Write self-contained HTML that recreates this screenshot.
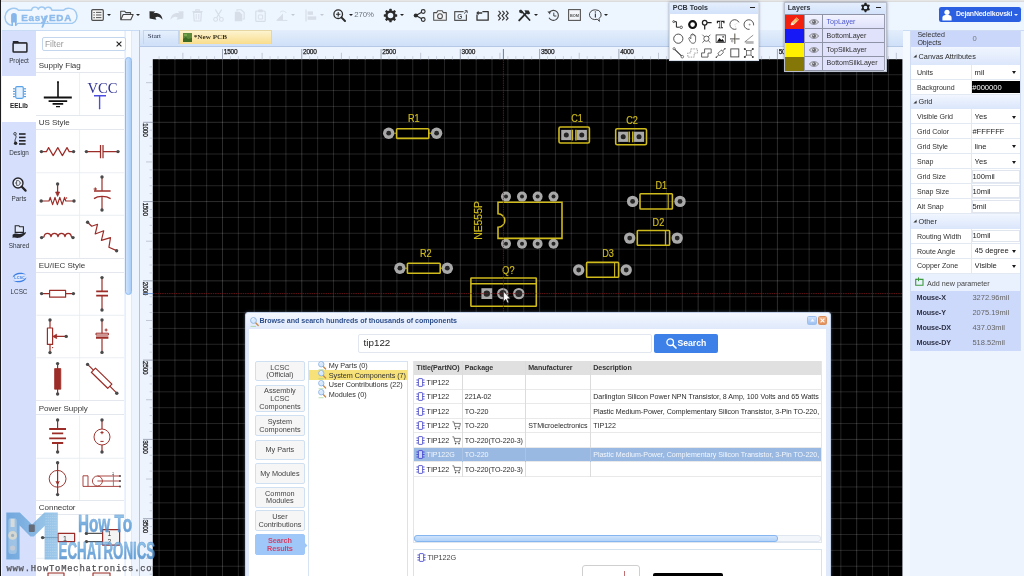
<!DOCTYPE html><html><head><meta charset="utf-8"><title>EasyEDA</title><style>
*{box-sizing:border-box;margin:0;padding:0}
html,body{width:1024px;height:576px;overflow:hidden;background:#edf4fe;font-family:"Liberation Sans",sans-serif;font-size:8px;color:#333}
.abs{position:absolute}
#root{position:absolute;left:0;top:0;width:1024px;height:576px;overflow:hidden;background:#edf4fe;filter:blur(0.45px)}
.t{position:absolute;white-space:nowrap;line-height:1}


.ti{position:absolute;overflow:visible}
.dd{position:absolute;width:0;height:0;border-left:2.2px solid transparent;border-right:2.2px solid transparent;border-top:2.6px solid #222}
.dd.dis{border-top-color:#c3c9d3}


#navbg{position:absolute;left:2px;top:30px;width:34.2px;height:546px;background:#d6e0fc}
#navsel{position:absolute;left:2px;top:76px;width:34.2px;height:46px;background:#fff}
.nl{position:absolute;left:2px;width:34px;text-align:center;font-size:6.35px;color:#33373f;line-height:1;white-space:nowrap}


#libbg{position:absolute;left:36.2px;top:31px;width:88.3px;height:545px;background:#fff}
#filter{position:absolute;left:41.6px;top:37px;width:84px;height:13.6px;border:1px solid #c3d6ee;border-radius:2px;background:#fff}
.lh{position:absolute;left:36.2px;width:88.3px;height:15px;background:#fff;border-top:1px solid #e4e8ee;border-bottom:1px solid #e4e8ee;font-size:8.05px;color:#3a3a3a;padding:3.4px 0 0 2.6px;line-height:1;white-space:nowrap;letter-spacing:-0.05px}
#lsb{position:absolute;left:125px;top:57px;width:6.8px;height:238.4px;background:linear-gradient(90deg,#cfe3fc,#a9cdf8);border:1px solid #8dbbf0;border-radius:3.4px}
#lsbt{position:absolute;left:124.6px;top:31px;width:7.2px;height:545px;background:#fbfdff;border-left:1px solid #e6eef9;border-right:1px solid #dfe9f7}


#tabbar{position:absolute;left:139px;top:30px;width:764px;height:17px;background:linear-gradient(#e3eefc,#cfe0f8);border-left:1px solid #b9c7dc;border-bottom:1px solid #b5c9e6}
#tabStart{position:absolute;left:143px;top:30.4px;width:36px;height:13.6px;background:linear-gradient(#e6f0fd,#cfe0f8);border:1px solid #c5d5ec;border-bottom:none}
#tabPcb{position:absolute;left:179px;top:30.4px;width:93px;height:13.6px;background:linear-gradient(#fdf3cf,#f8dd8c);border:1px solid #e6d6a0;border-bottom:none}
#rulerbg{position:absolute;left:139px;top:47px;width:764px;height:529px;background:#eef4fe;border-left:1px solid #b9c2d4}


#rp{position:absolute;left:910.4px;top:30.4px;width:110.8px;height:321px;background:#fff;border:1px solid #cfdcf4}
.rr{position:absolute;left:911.4px;width:108.8px;border-bottom:1px solid #e3e9f3;background:#fff}
.rh{position:absolute;left:911.4px;width:108.8px;background:linear-gradient(#f1f6ff,#dbe6fb);font-size:7.3px;color:#2b2b2b;line-height:1;white-space:nowrap}
.rk{position:absolute;left:917px;font-size:7.05px;color:#303030;line-height:1;white-space:nowrap}
.rv{position:absolute;left:972.4px;font-size:7.6px;color:#222;line-height:1;white-space:nowrap}
.rsep{position:absolute;left:971.4px;width:1px;background:#e3e9f3}
.rdd{position:absolute;left:1011.6px;width:0;height:0;border-left:2.5px solid transparent;border-right:2.5px solid transparent;border-top:3.2px solid #1a1a1a}
.rin{position:absolute;left:972px;width:47.6px;border:1px solid #e1e6ee;background:#fff}


.fp{position:absolute;background:#fff;box-shadow:inset 0 0 0 1px #d5dde9,0 0 2.5px rgba(60,70,90,.55)}
.fph{position:absolute;left:1px;top:1px;right:1px;height:11.6px;background:linear-gradient(#e4eefd,#d3e2fa)}
.fpt{position:absolute;left:3.8px;top:2.7px;font-size:7.05px;font-weight:bold;color:#30343c;line-height:1;white-space:nowrap}
.lyr{position:absolute;left:1.2px;width:98.4px;height:13.9px;background:#e0e1fb;border-bottom:1px solid #8f93a6}
.lyn{position:absolute;left:42.6px;font-size:7.1px;color:#333;line-height:1;white-space:nowrap;letter-spacing:-0.05px}


#dlg{position:absolute;left:245px;top:312.4px;width:586px;height:270px;background:#dfe9fa;border:1px solid #c4d3ea;border-radius:3px 3px 0 0;box-shadow:0 0 3px rgba(120,140,170,.6)}
#dlgh{position:absolute;left:246px;top:313.4px;width:584px;height:15.4px;background:linear-gradient(#f4f8ff,#dfe9fb);border-radius:3px 3px 0 0}
#dlgb{position:absolute;left:248.8px;top:328.8px;width:577.6px;height:250px;background:#fff}
.dbtn{position:absolute;left:255.2px;width:49.4px;background:#f6f6f6;border:1px solid #cfe0f3;border-radius:2px;font-size:7.3px;color:#444;text-align:center;line-height:7.9px;display:flex;align-items:center;justify-content:center;padding-top:0.6px}
.tr{position:absolute;left:413.8px;width:407.6px;height:14.5px;border-bottom:1px solid #e9e9e9;background:#fff}
.tc{position:absolute;font-size:7.1px;color:#2a2a2a;line-height:1;white-space:nowrap;letter-spacing:-0.05px}
.vs{position:absolute;width:1px;background:#dcdcdc}
.tree{position:absolute;left:328.8px;font-size:7.25px;color:#333;line-height:1;white-space:nowrap;letter-spacing:-0.05px}


</style></head><body><div id="root">
<div class="abs" style="left:0;top:0;width:1024px;height:2px;background:linear-gradient(#ebebeb,#d6d6d8)"></div>
<div class="abs" style="left:0;top:2px;width:1024px;height:28px;background:#edf5ff"></div>
<svg class="ti" style="left:0px;top:0px" width="84" height="32" viewBox="0 0 84 32">
<path d="M18.6 10.3 H31.6 C31.8 6.2 37.6 6.2 38.3 9.4 C39 6.2 44.6 6.2 45.1 9.4 C45.8 6.2 51.4 6.4 51.8 10.3 H63.6 C66 7.4 73.6 7.4 76 12.4 C78 16.6 76.8 21.8 72.2 23.4 H17.8 C15 26.4 8 26.2 5.6 20.6 C3.8 15.4 6.4 9.8 11.8 8.5 C14.8 7.8 17.4 8.8 18.6 10.3 Z" fill="#f1f7ff" stroke="#9fc9f1" stroke-width="1.4" stroke-linejoin="round"/>
<path d="M11.1 22.6 V15.8 A2.85 2.85 0 0 1 16.8 15.8 V22.6 Z" fill="#86b6ea"/>
<rect x="11.5" y="22" width="1.5" height="3.8" fill="#86b6ea"/><rect x="15" y="22" width="1.5" height="3.8" fill="#86b6ea"/>
<rect x="13.1" y="23.4" width="1.8" height="2.6" fill="#f1f7ff"/>
<text x="21.3" y="20.5" font-family="Liberation Sans, sans-serif" font-weight="bold" font-size="9.9" fill="#8ebcec" stroke="#8ebcec" stroke-width="0.4" letter-spacing="0.65">Easy</text>
<text x="49" y="20.5" font-family="Liberation Sans, sans-serif" font-weight="bold" font-size="9.9" fill="#8ebcec" stroke="#8ebcec" stroke-width="0.4" letter-spacing="0.75">EDA</text>
<path d="M47 16 L42.4 26.8" stroke="#8ebcec" stroke-width="1.9" stroke-linecap="round"/>
<path d="M47.2 21.4 L48 22.2" stroke="#8ebcec" stroke-width="1.2" stroke-linecap="round"/>
</svg>
<svg class="ti" style="left:91px;top:9px" width="13" height="12" viewBox="0 0 13 12"><rect x="0.7" y="0.7" width="11.6" height="10.6" rx="1" fill="#f4f4f4" stroke="#4e4e4e" stroke-width="1.2"/><g stroke="#5a5a5a" stroke-width="1.05"><line x1="5" y1="3.4" x2="10.4" y2="3.4"/><line x1="5" y1="6" x2="10.4" y2="6"/><line x1="5" y1="8.6" x2="10.4" y2="8.6"/><line x1="2.4" y1="3.4" x2="3.8" y2="3.4"/><line x1="2.4" y1="6" x2="3.8" y2="6"/><line x1="2.4" y1="8.6" x2="3.8" y2="8.6"/></g></svg>
<div class="dd" style="left:107.0px;top:14px"></div>
<svg class="ti" style="left:120px;top:10px" width="14" height="11" viewBox="0 0 14 11"><path d="M0.7 9.6 V1.2 H4.6 L5.8 2.6 H10.6 V4.4" fill="none" stroke="#444" stroke-width="1.05" stroke-linejoin="round"/><path d="M0.8 9.8 L3.2 4.5 H13.2 L10.8 9.8 Z" fill="#f4f6fa" stroke="#444" stroke-width="1.05" stroke-linejoin="round"/></svg>
<div class="dd" style="left:136.10000000000002px;top:14px"></div>
<svg class="ti" style="left:149px;top:10px" width="14" height="11" viewBox="0 0 14 11"><path d="M0.5 1.2 L6.2 1.4 L4.4 3.2 C9.5 2.2 13.2 5 13.5 9.8 C11.5 7 8.6 6.2 6.3 7.4 L7.4 9.8 L0.6 8.6 Z" fill="#2b2b2b"/></svg>
<svg class="ti" style="left:170px;top:10px" width="14" height="11" viewBox="0 0 14 11"><path d="M13.5 1.2 L7.8 1.4 L9.6 3.2 C4.5 2.2 0.8 5 0.5 9.8 C2.5 7 5.4 6.2 7.7 7.4 L6.6 9.8 L13.4 8.6 Z" fill="#d8dee8"/></svg>
<svg class="ti" style="left:192px;top:9px" width="11" height="13" viewBox="0 0 11 13"><path d="M1.6 3.4 H9.4 L8.8 12 H2.2 Z" fill="none" stroke="#d8dee8" stroke-width="1.2"/><path d="M0.4 2.6 H10.6 M3.8 2.4 V0.8 H7.2 V2.4" fill="none" stroke="#d8dee8" stroke-width="1.2"/><path d="M4.2 5 V10.4 M6.8 5 V10.4" stroke="#d8dee8" stroke-width="0.9"/></svg>
<svg class="ti" style="left:213px;top:9px" width="11" height="13" viewBox="0 0 11 13"><path d="M2.4 0.6 L7.4 8.8 M8.6 0.6 L3.6 8.8" stroke="#d8dee8" stroke-width="1.2" fill="none"/><circle cx="2.6" cy="10.4" r="1.9" fill="none" stroke="#d8dee8" stroke-width="1.1"/><circle cx="8.4" cy="10.4" r="1.9" fill="none" stroke="#d8dee8" stroke-width="1.1"/></svg>
<svg class="ti" style="left:234px;top:9px" width="11" height="13" viewBox="0 0 11 13"><path d="M3 2.6 V0.8 H7.2 L10.2 3.6 V10 H8.4" fill="none" stroke="#d8dee8" stroke-width="1.1"/><path d="M0.8 2.8 H5.6 L8.2 5.4 V12.2 H0.8 Z" fill="#d8dee8"/></svg>
<svg class="ti" style="left:255px;top:9px" width="11" height="13" viewBox="0 0 11 13"><rect x="0.8" y="2" width="9.4" height="10.4" rx="1" fill="none" stroke="#d8dee8" stroke-width="1.2"/><rect x="3.2" y="0.6" width="4.6" height="2.6" rx="0.6" fill="#d8dee8"/><path d="M3.4 6 H7.6 V10 H3.4 Z" fill="none" stroke="#d8dee8" stroke-width="0.9"/></svg>
<svg class="ti" style="left:276px;top:10px" width="12" height="11" viewBox="0 0 12 11"><path d="M0.6 10 L7 3.4 V10 Z" fill="#d8dee8"/><path d="M0.6 10.4 H11.4" stroke="#d8dee8" stroke-width="1"/><path d="M4 2.4 C6 0.4 9 0.8 10.4 3" fill="none" stroke="#d8dee8" stroke-width="0.9"/></svg>
<div class="dd dis" style="left:291.2px;top:14px"></div>
<svg class="ti" style="left:305px;top:9px" width="12" height="13" viewBox="0 0 12 13"><path d="M1 0.6 V12.4" stroke="#d8dee8" stroke-width="1.2"/><rect x="2.6" y="2.4" width="5.4" height="3.4" fill="#d8dee8"/><rect x="2.6" y="7.4" width="8.6" height="3.4" fill="#d8dee8"/></svg>
<div class="dd dis" style="left:320.0px;top:14px"></div>
<svg class="ti" style="left:333px;top:9px" width="13" height="13" viewBox="0 0 13 13"><circle cx="5.2" cy="5.2" r="4.3" fill="none" stroke="#2b2b2b" stroke-width="1.3"/><path d="M8.4 8.4 L12 12" stroke="#2b2b2b" stroke-width="2" stroke-linecap="round"/><path d="M5.2 3 V7.4 M3 5.2 H7.4" stroke="#2b2b2b" stroke-width="1.1"/></svg>
<div class="dd" style="left:348.8px;top:14px"></div>
<div class="t" style="left:354.2px;top:11.4px;font-size:7.8px;color:#6f747d;letter-spacing:-0.1px">270%</div>
<svg class="ti" style="left:384px;top:9px" width="13" height="13" viewBox="0 0 13 13"><rect x="5.3" y="-0.2" width="2.4" height="3.2" rx="0.5" fill="#2b2b2b" transform="rotate(0 6.5 6.5)"/><rect x="5.3" y="-0.2" width="2.4" height="3.2" rx="0.5" fill="#2b2b2b" transform="rotate(45 6.5 6.5)"/><rect x="5.3" y="-0.2" width="2.4" height="3.2" rx="0.5" fill="#2b2b2b" transform="rotate(90 6.5 6.5)"/><rect x="5.3" y="-0.2" width="2.4" height="3.2" rx="0.5" fill="#2b2b2b" transform="rotate(135 6.5 6.5)"/><rect x="5.3" y="-0.2" width="2.4" height="3.2" rx="0.5" fill="#2b2b2b" transform="rotate(180 6.5 6.5)"/><rect x="5.3" y="-0.2" width="2.4" height="3.2" rx="0.5" fill="#2b2b2b" transform="rotate(225 6.5 6.5)"/><rect x="5.3" y="-0.2" width="2.4" height="3.2" rx="0.5" fill="#2b2b2b" transform="rotate(270 6.5 6.5)"/><rect x="5.3" y="-0.2" width="2.4" height="3.2" rx="0.5" fill="#2b2b2b" transform="rotate(315 6.5 6.5)"/><circle cx="6.5" cy="6.5" r="4" fill="none" stroke="#2b2b2b" stroke-width="2.4"/></svg>
<div class="dd" style="left:400.2px;top:14px"></div>
<svg class="ti" style="left:413px;top:9px" width="13" height="13" viewBox="0 0 13 13"><path d="M10 2.6 L3 6.5 L10 10.4" fill="none" stroke="#2b2b2b" stroke-width="1.2"/><circle cx="10.2" cy="2.5" r="1.9" fill="#eef4ff" stroke="#2b2b2b" stroke-width="1.1"/><circle cx="10.2" cy="10.5" r="1.9" fill="#eef4ff" stroke="#2b2b2b" stroke-width="1.1"/><circle cx="2.8" cy="6.5" r="2.1" fill="#2b2b2b"/></svg>
<svg class="ti" style="left:433px;top:10px" width="14" height="11" viewBox="0 0 14 11"><path d="M0.7 2.6 H3.8 L4.8 0.8 H9.2 L10.2 2.6 H13.3 V10.3 H0.7 Z" fill="#f4f6fa" stroke="#4c4c4c" stroke-width="1.05" stroke-linejoin="round"/><circle cx="7" cy="6.2" r="2.4" fill="none" stroke="#4c4c4c" stroke-width="1.05"/></svg>
<svg class="ti" style="left:454px;top:10px" width="14" height="11" viewBox="0 0 14 11"><path d="M9.6 1.6 H0.7 V10.3 H12.4 V4.6" fill="none" stroke="#555" stroke-width="1.2" stroke-linejoin="round"/><text x="3.2" y="8.6" font-family="Liberation Sans, sans-serif" font-weight="bold" font-size="6.6" fill="#555">G</text><path d="M10 3.6 L13 0.8 M10.8 0.7 H13.2 V3.1" fill="none" stroke="#555" stroke-width="1"/></svg>
<svg class="ti" style="left:476px;top:10px" width="13" height="11" viewBox="0 0 13 11"><path d="M1 4.4 V10.2 H12.2 V1.6 H6.4" fill="none" stroke="#333" stroke-width="1.3" stroke-linejoin="round"/><path d="M0.2 3 L2.6 0.8 V2.3 H6.2 V3.7 H2.6 V5.2 Z" fill="#333"/></svg>
<svg class="ti" style="left:497px;top:10px" width="13" height="11" viewBox="0 0 13 11"><path d="M1.6 0.8 L3.6 3.2 L1.2 5.8 L3.4 8.2 L1.4 10.4" fill="none" stroke="#333" stroke-width="1.1"/><path d="M5.4 0.8 L7.4 3.2 L5.0 5.8 L7.199999999999999 8.2 L5.199999999999999 10.4" fill="none" stroke="#333" stroke-width="1.1"/><path d="M9.2 0.8 L11.2 3.2 L8.799999999999999 5.8 L11.0 8.2 L9.0 10.4" fill="none" stroke="#333" stroke-width="1.1"/></svg>
<svg class="ti" style="left:518px;top:9px" width="14" height="13" viewBox="0 0 14 13"><path d="M1.2 11.4 L8.6 3.6" stroke="#2b2b2b" stroke-width="1.9" stroke-linecap="round"/><path d="M6.4 1.2 L10.8 1.4 L12.2 4.4 L10 5.6 L7.6 3.4 Z" fill="#2b2b2b"/><path d="M3.6 2.2 L11.6 11" stroke="#2b2b2b" stroke-width="1.7" stroke-linecap="round"/><path d="M1 1.6 L3 0.6 L5 2.8 L3.6 4.4 L1.4 3.4 Z" fill="#2b2b2b"/></svg>
<div class="dd" style="left:534.0px;top:14px"></div>
<svg class="ti" style="left:546.5px;top:9px" width="13" height="13" viewBox="0 0 13 13"><path d="M2.4 3.4 A5 5 0 1 1 2 8.8" fill="none" stroke="#444" stroke-width="1.1"/><path d="M0.4 2.6 L3.6 2.4 L3 5.4 Z" fill="#444"/><path d="M6.8 3.6 V7 H9.4" fill="none" stroke="#444" stroke-width="1"/></svg>
<svg class="ti" style="left:568px;top:9px" width="13" height="12" viewBox="0 0 13 12"><rect x="0.6" y="0.6" width="11.8" height="10.8" fill="#f3f5f9" stroke="#555" stroke-width="1.1"/><text x="6.5" y="7.5" text-anchor="middle" font-family="Liberation Sans, sans-serif" font-weight="bold" font-size="3.9" fill="#555">BOM</text></svg>
<svg class="ti" style="left:589px;top:8.5px" width="13" height="14" viewBox="0 0 13 14"><path d="M6.4 0.8 A5.6 4.9 0 1 0 8.2 10.2 L10.4 12.4 L10 9.6 A5.6 4.9 0 0 0 6.4 0.8 Z" fill="none" stroke="#444" stroke-width="1"/><path d="M6.4 4.6 V8.4" stroke="#444" stroke-width="1.2"/><circle cx="6.4" cy="3" r="0.75" fill="#444"/></svg>
<div class="dd" style="left:604.1999999999999px;top:14px"></div>
<div class="abs" style="left:939px;top:7.3px;width:82px;height:14.8px;background:#2a5fe2;border-radius:2.2px"></div>
<svg class="ti" style="left:942px;top:9px" width="10" height="12" viewBox="0 0 10 12"><circle cx="5" cy="3.3" r="2.6" fill="#fff"/><path d="M0.4 11.4 V8.8 C0.4 6.6 2.4 5.8 5 5.8 C7.6 5.8 9.6 6.6 9.6 8.8 V11.4 Z" fill="#fff"/></svg>
<div class="t" style="left:956px;top:10.6px;font-size:6.95px;font-weight:bold;color:#f4f7ff;letter-spacing:-0.2px">DejanNedelkovski</div>
<div class="dd" style="left:1013.6px;top:14px;border-top-color:#e8efff"></div>
<div id="navbg"></div><div id="navsel"></div>
<div class="abs" style="left:2px;top:30px;width:1022px;height:1px;background:#c9dcf6"></div>
<svg class="abs" style="left:11.5px;top:40px;overflow:visible" width="16" height="13" viewBox="0 0 16 13"><path d="M0.8 1 H6 L7.4 2.6 H15.2 V3 H0.8 Z" fill="#26262a"/><rect x="1.1" y="3" width="13.8" height="9" rx="0.8" fill="#dfe6f8" stroke="#26262a" stroke-width="1.5"/></svg>
<div class="nl" style="top:57.6px">Project</div>
<svg class="abs" style="left:12.5px;top:86px;overflow:visible" width="13" height="13" viewBox="0 0 13 13"><rect x="2.7" y="0.7" width="7.6" height="11.6" rx="1.2" fill="#e9f3ff" stroke="#5aa2e8" stroke-width="1.2"/><rect x="0" y="2.2" width="2" height="1.2" fill="#5aa2e8"/><rect x="11" y="2.2" width="2" height="1.2" fill="#5aa2e8"/><rect x="0" y="4.800000000000001" width="2" height="1.2" fill="#5aa2e8"/><rect x="11" y="4.800000000000001" width="2" height="1.2" fill="#5aa2e8"/><rect x="0" y="7.4" width="2" height="1.2" fill="#5aa2e8"/><rect x="11" y="7.4" width="2" height="1.2" fill="#5aa2e8"/><rect x="0" y="10.0" width="2" height="1.2" fill="#5aa2e8"/><rect x="11" y="10.0" width="2" height="1.2" fill="#5aa2e8"/></svg>
<div class="nl" style="top:103.4px;font-weight:bold;color:#222">EELib</div>
<svg class="abs" style="left:13px;top:131.6px;overflow:visible" width="13" height="13" viewBox="0 0 13 13"><g stroke="#26262a" stroke-width="1.6"><line x1="6" y1="2" x2="12.6" y2="2"/><line x1="6" y1="5.4" x2="12.6" y2="5.4"/><line x1="6" y1="8.8" x2="12.6" y2="8.8"/><line x1="6" y1="12" x2="12.6" y2="12"/></g><path d="M2 2.6 C5 5.4 0.4 7.6 2.6 10.6" fill="none" stroke="#26262a" stroke-width="0.9"/><circle cx="2" cy="1.8" r="1.3" fill="#d6e0fc" stroke="#26262a" stroke-width="0.8"/><circle cx="2.6" cy="11.2" r="1.7" fill="#26262a"/></svg>
<div class="nl" style="top:149.8px">Design</div>
<svg class="abs" style="left:12px;top:177.4px;overflow:visible" width="15" height="15" viewBox="0 0 15 15"><circle cx="6" cy="6" r="5" fill="#e8eefc" stroke="#26262a" stroke-width="1.4"/><path d="M9.8 9.8 L13.6 13.6" stroke="#26262a" stroke-width="2.2" stroke-linecap="round"/><path d="M4.6 3.6 H6.2 C8.6 3.6 8.6 8.4 6.2 8.4 H4.6 Z M3 6 H4.6 M8 6 H9.2" fill="none" stroke="#444" stroke-width="0.8"/></svg>
<div class="nl" style="top:196.2px">Parts</div>
<svg class="abs" style="left:12px;top:224.6px;overflow:visible" width="15" height="14" viewBox="0 0 15 14"><path d="M3.2 0.8 H7 L7.8 1.8 H11.4 V7.4 H3.2 Z" fill="#e4ebfb" stroke="#26262a" stroke-width="1.1"/><path d="M0.6 9.8 C3 7.6 5 8.6 7 9 C9 9.4 11 8 13.8 7 C14.6 8.4 11 12 7 12.8 C4.4 13.2 2.6 12 0.6 13 Z" fill="#26262a"/></svg>
<div class="nl" style="top:242.8px">Shared</div>
<svg class="abs" style="left:11.6px;top:272px;overflow:visible" width="15" height="11" viewBox="0 0 15 11"><path d="M0.6 5.6 C1.4 1 9.4 -0.8 14 2.6 C9.4 1.2 3.8 2.6 0.6 5.6 Z" fill="#3d7fe4"/><path d="M14.4 5.4 C13.6 10 5.6 11.8 1 8.4 C5.6 9.8 11.2 8.4 14.4 5.4 Z" fill="#3d7fe4"/><ellipse cx="7.5" cy="5.5" rx="5.6" ry="3.2" fill="#e6eefe" opacity="0.7"/><text x="7.5" y="7" text-anchor="middle" font-family="Liberation Sans, sans-serif" font-weight="bold" font-size="3.8" fill="#3d7fe4">LCSC</text></svg>
<div class="nl" style="top:289px">LCSC</div>
<div id="libbg"></div><div id="lsbt"></div><div id="lsb"></div>
<div id="filter"></div>
<div class="t" style="left:45px;top:39.8px;font-size:8.4px;color:#9a9a9a">Filter</div>
<svg class="abs" style="left:116px;top:40.6px" width="6" height="6" viewBox="0 0 6 6"><path d="M0.6 0.6 L5.4 5.4 M5.4 0.6 L0.6 5.4" stroke="#222" stroke-width="1.1"/></svg>
<div class="lh" style="top:57.5px">Supply Flag</div>
<div class="lh" style="top:115px">US Style</div>
<div class="lh" style="top:257.75px">EU/IEC Style</div>
<div class="lh" style="top:400.25px">Power Supply</div>
<div class="lh" style="top:500px">Connector</div>
<svg class="abs" style="left:0;top:0" width="140" height="576" viewBox="0 0 140 576"><defs><clipPath id="lc"><rect x="36.2" y="57" width="88.3" height="519"/></clipPath></defs><g clip-path="url(#lc)"><line x1="36.2" y1="172.75" x2="124.5" y2="172.75" stroke="#e6eaf0" stroke-width="0.8"/><line x1="36.2" y1="215.25" x2="124.5" y2="215.25" stroke="#e6eaf0" stroke-width="0.8"/><line x1="36.2" y1="315.25" x2="124.5" y2="315.25" stroke="#e6eaf0" stroke-width="0.8"/><line x1="36.2" y1="357.75" x2="124.5" y2="357.75" stroke="#e6eaf0" stroke-width="0.8"/><line x1="36.2" y1="458.25" x2="124.5" y2="458.25" stroke="#e6eaf0" stroke-width="0.8"/><line x1="36.2" y1="558.25" x2="124.5" y2="558.25" stroke="#e6eaf0" stroke-width="0.8"/><line x1="79.6" y1="72.5" x2="79.6" y2="115" stroke="#e6eaf0" stroke-width="0.8"/><line x1="79.6" y1="130" x2="79.6" y2="257.75" stroke="#e6eaf0" stroke-width="0.8"/><line x1="79.6" y1="272.75" x2="79.6" y2="400.25" stroke="#e6eaf0" stroke-width="0.8"/><line x1="79.6" y1="415.5" x2="79.6" y2="500" stroke="#e6eaf0" stroke-width="0.8"/><line x1="79.6" y1="515.75" x2="79.6" y2="576" stroke="#e6eaf0" stroke-width="0.8"/><path d="M58 82 V97.4" fill="none" stroke="#111" stroke-width="1.62" stroke-linejoin="round"/><circle cx="58" cy="82" r="0.9" fill="#111"/><path d="M43.8 97.5 H71.8" fill="none" stroke="#111" stroke-width="1.88" stroke-linejoin="round"/><path d="M48.6 101 H67.2" fill="none" stroke="#111" stroke-width="1.75" stroke-linejoin="round"/><path d="M52.6 103.9 H63.2" fill="none" stroke="#111" stroke-width="1.56" stroke-linejoin="round"/><path d="M56 106.6 H60" fill="none" stroke="#111" stroke-width="1.38" stroke-linejoin="round"/><text x="102.6" y="93" text-anchor="middle" font-family="Liberation Serif, serif" font-size="14.6" fill="#2f3396">VCC</text><path d="M94 95.8 H106" fill="none" stroke="#4a4ee0" stroke-width="1.38" stroke-linejoin="round"/><path d="M99.6 95.8 V108.4" fill="none" stroke="#4a4ee0" stroke-width="1.38" stroke-linejoin="round"/><circle cx="99.6" cy="108.6" r="0.8" fill="#4a4ee0"/><path d="M41.4 151.6 H46.4 L48.6 147.6 L53.2 155.6 L57.8 147.6 L62.4 155.6 L67 147.6 L69.2 151.6 H73.6" fill="none" stroke="#9c2c27" stroke-width="1.19" stroke-linejoin="round"/><circle cx="41.4" cy="151.6" r="1.7" fill="#4a4a4a"/><circle cx="73.6" cy="151.6" r="1.7" fill="#4a4a4a"/><path d="M86.4 151.6 H100.4 M103 151.6 H118" fill="none" stroke="#9c2c27" stroke-width="1.19" stroke-linejoin="round"/><path d="M100.5 145 V158.2 M103 145 V158.2" fill="none" stroke="#9c2c27" stroke-width="1.25" stroke-linejoin="round"/><circle cx="86.4" cy="151.6" r="1.7" fill="#4a4a4a"/><circle cx="118" cy="151.6" r="1.7" fill="#4a4a4a"/><path d="M41.2 201 H49 L50.2 197.4 L52.6 204.6 L55 197.4 L57.4 204.6 L59.8 197.4 L62.2 204.6 L64.6 197.4 L65.8 201 H74" fill="none" stroke="#9c2c27" stroke-width="1.19" stroke-linejoin="round"/><circle cx="41.2" cy="201" r="1.7" fill="#4a4a4a"/><circle cx="74" cy="201" r="1.7" fill="#4a4a4a"/><path d="M57.6 184 V193" fill="none" stroke="#9c2c27" stroke-width="1.25" stroke-linejoin="round"/><path d="M55.6 192 H59.6 L57.6 196.4 Z" fill="#9c2c27" stroke="#9c2c27" stroke-width="0.75" stroke-linejoin="round"/><circle cx="57.6" cy="184" r="1.7" fill="#4a4a4a"/><circle cx="66.6" cy="198" r="0.7" fill="#9c2c27"/><path d="M102 177 V191 M102 196.6 V210" fill="none" stroke="#9c2c27" stroke-width="1.19" stroke-linejoin="round"/><path d="M94 191 H110.6" fill="none" stroke="#9c2c27" stroke-width="1.38" stroke-linejoin="round"/><path d="M94 198.6 C98 195.6 106 195.6 110.6 198.6" fill="none" stroke="#9c2c27" stroke-width="1.38" stroke-linejoin="round"/><path d="M93.6 189 H97 M95.3 187.4 V190.6" fill="none" stroke="#9c2c27" stroke-width="1.00" stroke-linejoin="round"/><circle cx="102" cy="177" r="1.7" fill="#4a4a4a"/><circle cx="102" cy="210" r="1.7" fill="#4a4a4a"/><path d="M41.6 237.6 L44 236.8 C44.6 232.4 50.4 232.4 51 236.6 C51.6 232.4 57.4 232.4 58 236.6 C58.6 232.4 64.4 232.4 65 236.6 C65.6 232.4 71 232.4 71.4 236.8 L73 237.6" fill="none" stroke="#9c2c27" stroke-width="1.25" stroke-linejoin="round"/><circle cx="41.6" cy="237.6" r="1.7" fill="#4a4a4a"/><circle cx="73" cy="237.6" r="1.7" fill="#4a4a4a"/><path d="M87.6 222.2 L91.7 226.2 L97.5 224.3 L95.2 234 L103.7 230.8 L101.4 240.4 L110.5 237.6 L108.9 247.3 L116.6 250.6" fill="none" stroke="#9c2c27" stroke-width="1.19" stroke-linejoin="round"/><circle cx="87.6" cy="222.2" r="1.7" fill="#4a4a4a"/><circle cx="116.6" cy="250.8" r="1.7" fill="#4a4a4a"/><path d="M41.6 293.6 H49.6 M65.6 293.6 H73.4" fill="none" stroke="#9c2c27" stroke-width="1.19" stroke-linejoin="round"/><path d="M49.6 290.4 H65.6 V297.2 H49.6 Z" fill="none" stroke="#9c2c27" stroke-width="1.19" stroke-linejoin="round"/><circle cx="41.6" cy="293.6" r="1.7" fill="#4a4a4a"/><circle cx="73.4" cy="293.6" r="1.7" fill="#4a4a4a"/><path d="M102 277.6 V291 M102 296 V310" fill="none" stroke="#9c2c27" stroke-width="1.19" stroke-linejoin="round"/><path d="M96.2 291.4 H108 M96.2 295.6 H108" fill="none" stroke="#9c2c27" stroke-width="1.88" stroke-linejoin="round"/><circle cx="102" cy="277.6" r="1.7" fill="#4a4a4a"/><circle cx="102" cy="310" r="1.7" fill="#4a4a4a"/><path d="M50 320 V328 M50 344.4 V352.6" fill="none" stroke="#9c2c27" stroke-width="1.19" stroke-linejoin="round"/><path d="M47.4 328 H52.6 V344.4 H47.4 Z" fill="none" stroke="#9c2c27" stroke-width="1.19" stroke-linejoin="round"/><path d="M66 336.4 H56" fill="none" stroke="#9c2c27" stroke-width="1.19" stroke-linejoin="round"/><path d="M56.6 334.2 V338.6 L52.8 336.4 Z" fill="#9c2c27" stroke="#9c2c27" stroke-width="0.75" stroke-linejoin="round"/><circle cx="50" cy="320" r="1.7" fill="#4a4a4a"/><circle cx="50" cy="352.6" r="1.7" fill="#4a4a4a"/><circle cx="66.2" cy="336.4" r="1.7" fill="#4a4a4a"/><circle cx="52.6" cy="347.6" r="0.7" fill="#9c2c27"/><path d="M102 320 V333.4 M102 338.8 V352.4" fill="none" stroke="#9c2c27" stroke-width="1.19" stroke-linejoin="round"/><path d="M96 333.2 H108.4 V335 H96 Z" fill="none" stroke="#9c2c27" stroke-width="1.00" stroke-linejoin="round"/><path d="M96 337.6 H108.4" fill="none" stroke="#9c2c27" stroke-width="2.12" stroke-linejoin="round"/><path d="M104.6 330 H107.6 M106.1 328.5 V331.5" fill="none" stroke="#9c2c27" stroke-width="1.00" stroke-linejoin="round"/><circle cx="102" cy="320" r="1.7" fill="#4a4a4a"/><circle cx="102" cy="352.4" r="1.7" fill="#4a4a4a"/><path d="M57.6 363.6 V394" fill="none" stroke="#9c2c27" stroke-width="1.19" stroke-linejoin="round"/><path d="M54.6 368.6 H60.8 V389.2 H54.6 Z" fill="#9c2c27" stroke="#9c2c27" stroke-width="0.75" stroke-linejoin="round"/><circle cx="57.6" cy="363.6" r="1.7" fill="#4a4a4a"/><circle cx="57.6" cy="394" r="1.7" fill="#4a4a4a"/><path d="M87.6 364.4 L93.4 370.2 M109.8 386.2 L116.8 393.2" fill="none" stroke="#9c2c27" stroke-width="1.19" stroke-linejoin="round"/><path d="M95.5 368.1 L111.9 384.1 L107.7 388.3 L91.3 372.3 Z" fill="none" stroke="#9c2c27" stroke-width="1.19" stroke-linejoin="round"/><circle cx="87.6" cy="364.4" r="1.7" fill="#4a4a4a"/><circle cx="116.8" cy="393.2" r="1.7" fill="#4a4a4a"/><path d="M57.6 420 V429 M57.6 443.4 V452" fill="none" stroke="#9c2c27" stroke-width="1.19" stroke-linejoin="round"/><path d="M49.2 429 H66 M52 433.4 H63.2 M49.2 438.4 H66 M52 443 H63.2" fill="none" stroke="#9c2c27" stroke-width="1.81" stroke-linejoin="round"/><circle cx="57.6" cy="420" r="1.7" fill="#4a4a4a"/><circle cx="57.6" cy="452" r="1.7" fill="#4a4a4a"/><path d="M102 420 V429 M102 445 V452" fill="none" stroke="#9c2c27" stroke-width="1.19" stroke-linejoin="round"/><circle cx="102" cy="437" r="8" fill="none" stroke="#9c2c27" stroke-width="0.95"/><path d="M100.4 432.6 H103.6 M102 431 V434.2 M100.4 441.4 H103.6" fill="none" stroke="#9c2c27" stroke-width="1.00" stroke-linejoin="round"/><circle cx="102" cy="420" r="1.7" fill="#4a4a4a"/><circle cx="102" cy="452" r="1.7" fill="#4a4a4a"/><path d="M57.6 462.8 V494.4" fill="none" stroke="#9c2c27" stroke-width="1.19" stroke-linejoin="round"/><circle cx="57.6" cy="478.8" r="8.4" fill="none" stroke="#9c2c27" stroke-width="0.95"/><path d="M56 481 L57.6 484.6 L59.2 481" fill="none" stroke="#9c2c27" stroke-width="1.00" stroke-linejoin="round"/><circle cx="57.6" cy="462.8" r="1.7" fill="#4a4a4a"/><circle cx="57.6" cy="494.6" r="1.7" fill="#4a4a4a"/><path d="M83 475.8 H88 V486.4 H83 Z" fill="none" stroke="#9c2c27" stroke-width="0.88" stroke-linejoin="round"/><circle cx="97.4" cy="481" r="5" fill="none" stroke="#9c2c27" stroke-width="0.85"/><path d="M97.4 476 H120 M97.4 481 H120 M88 486.4 H120" fill="none" stroke="#9c2c27" stroke-width="0.88" stroke-linejoin="round"/><path d="M113.4 474 V486.4" fill="none" stroke="#777" stroke-width="0.88" stroke-linejoin="round"/><circle cx="120" cy="476" r="1.0" fill="#4a4a4a"/><circle cx="120" cy="481" r="1.0" fill="#4a4a4a"/><circle cx="120" cy="486.4" r="1.0" fill="#4a4a4a"/><text x="112" y="474.6" font-family="Liberation Sans, sans-serif" font-size="3.6" fill="#555">2</text><path d="M42.6 537.6 H58" fill="none" stroke="#555" stroke-width="1.19" stroke-linejoin="round"/><path d="M58 533.4 H74.6 V541.6 H58 Z" fill="#f4f4f4" stroke="#9c2c27" stroke-width="1.25" stroke-linejoin="round"/><circle cx="42.6" cy="537.6" r="1.7" fill="#4a4a4a"/><text x="65" y="540.6" text-anchor="middle" font-family="Liberation Sans, sans-serif" font-size="7" fill="#333">1</text><path d="M86.4 533.4 H102.6 M86.4 541.6 H102.6" fill="none" stroke="#555" stroke-width="1.19" stroke-linejoin="round"/><path d="M102.6 529.6 H119.6 V545 H102.6 Z" fill="#f4f4f4" stroke="#9c2c27" stroke-width="1.25" stroke-linejoin="round"/><circle cx="86.4" cy="533.4" r="1.7" fill="#4a4a4a"/><circle cx="86.4" cy="541.6" r="1.7" fill="#4a4a4a"/><text x="109.4" y="536.4" text-anchor="middle" font-family="Liberation Sans, sans-serif" font-size="6.6" fill="#333">1</text><text x="109.4" y="543.8" text-anchor="middle" font-family="Liberation Sans, sans-serif" font-size="6.6" fill="#333">2</text><path d="M48 573 H64 V580 H48Z M93 573 H110 V580 H93Z" fill="#f4f4f4" stroke="#9c2c27" stroke-width="1.12" stroke-linejoin="round"/></g></svg>
<div id="rulerbg"></div>
<div id="tabbar"></div><div id="tabStart"></div><div id="tabPcb"></div>
<div class="t" style="left:147.8px;top:33.2px;font-family:'Liberation Serif',serif;font-size:7px;color:#1f2740">Start</div>
<div class="t" style="left:193.8px;top:33.6px;font-family:'Liberation Serif',serif;font-weight:bold;font-size:7.15px;color:#3a3320">*New PCB</div>
<svg class="abs" style="left:183px;top:33px" width="9" height="9" viewBox="0 0 9 9"><rect width="9" height="9" fill="#5b8a3a"/><path d="M0 6 L3 4 L5 6 L9 5 V9 H0Z" fill="#3d6a22"/><rect x="1" y="1" width="3" height="2" fill="#7aa84e"/></svg>
<svg class="abs" style="left:0;top:0" width="1024" height="576" viewBox="0 0 1024 576"><defs><clipPath id="cv"><rect x="153" y="59.4" width="749.4" height="517"/></clipPath></defs><rect x="152.8" y="59.2" width="749.6" height="517" fill="#000"/><g stroke-width="0.75"><line x1="159.08" y1="59.4" x2="159.08" y2="576" stroke="#fff" stroke-opacity="0.19"/><line x1="174.94" y1="59.4" x2="174.94" y2="576" stroke="#fff" stroke-opacity="0.19"/><line x1="190.79" y1="59.4" x2="190.79" y2="576" stroke="#fff" stroke-opacity="0.19"/><line x1="206.65" y1="59.4" x2="206.65" y2="576" stroke="#fff" stroke-opacity="0.19"/><line x1="222.50" y1="59.4" x2="222.50" y2="576" stroke="#fff" stroke-opacity="0.235"/><line x1="238.35" y1="59.4" x2="238.35" y2="576" stroke="#fff" stroke-opacity="0.19"/><line x1="254.21" y1="59.4" x2="254.21" y2="576" stroke="#fff" stroke-opacity="0.19"/><line x1="270.06" y1="59.4" x2="270.06" y2="576" stroke="#fff" stroke-opacity="0.19"/><line x1="285.92" y1="59.4" x2="285.92" y2="576" stroke="#fff" stroke-opacity="0.19"/><line x1="301.77" y1="59.4" x2="301.77" y2="576" stroke="#fff" stroke-opacity="0.235"/><line x1="317.63" y1="59.4" x2="317.63" y2="576" stroke="#fff" stroke-opacity="0.19"/><line x1="333.49" y1="59.4" x2="333.49" y2="576" stroke="#fff" stroke-opacity="0.19"/><line x1="349.34" y1="59.4" x2="349.34" y2="576" stroke="#fff" stroke-opacity="0.19"/><line x1="365.19" y1="59.4" x2="365.19" y2="576" stroke="#fff" stroke-opacity="0.19"/><line x1="381.05" y1="59.4" x2="381.05" y2="576" stroke="#fff" stroke-opacity="0.235"/><line x1="396.90" y1="59.4" x2="396.90" y2="576" stroke="#fff" stroke-opacity="0.19"/><line x1="412.76" y1="59.4" x2="412.76" y2="576" stroke="#fff" stroke-opacity="0.19"/><line x1="428.62" y1="59.4" x2="428.62" y2="576" stroke="#fff" stroke-opacity="0.19"/><line x1="444.47" y1="59.4" x2="444.47" y2="576" stroke="#fff" stroke-opacity="0.19"/><line x1="460.32" y1="59.4" x2="460.32" y2="576" stroke="#fff" stroke-opacity="0.235"/><line x1="476.18" y1="59.4" x2="476.18" y2="576" stroke="#fff" stroke-opacity="0.19"/><line x1="492.03" y1="59.4" x2="492.03" y2="576" stroke="#fff" stroke-opacity="0.19"/><line x1="507.89" y1="59.4" x2="507.89" y2="576" stroke="#fff" stroke-opacity="0.19"/><line x1="523.75" y1="59.4" x2="523.75" y2="576" stroke="#fff" stroke-opacity="0.19"/><line x1="539.60" y1="59.4" x2="539.60" y2="576" stroke="#fff" stroke-opacity="0.235"/><line x1="555.45" y1="59.4" x2="555.45" y2="576" stroke="#fff" stroke-opacity="0.19"/><line x1="571.31" y1="59.4" x2="571.31" y2="576" stroke="#fff" stroke-opacity="0.19"/><line x1="587.16" y1="59.4" x2="587.16" y2="576" stroke="#fff" stroke-opacity="0.19"/><line x1="603.02" y1="59.4" x2="603.02" y2="576" stroke="#fff" stroke-opacity="0.19"/><line x1="618.88" y1="59.4" x2="618.88" y2="576" stroke="#fff" stroke-opacity="0.235"/><line x1="634.73" y1="59.4" x2="634.73" y2="576" stroke="#fff" stroke-opacity="0.19"/><line x1="650.59" y1="59.4" x2="650.59" y2="576" stroke="#fff" stroke-opacity="0.19"/><line x1="666.44" y1="59.4" x2="666.44" y2="576" stroke="#fff" stroke-opacity="0.19"/><line x1="682.30" y1="59.4" x2="682.30" y2="576" stroke="#fff" stroke-opacity="0.19"/><line x1="698.15" y1="59.4" x2="698.15" y2="576" stroke="#fff" stroke-opacity="0.235"/><line x1="714.00" y1="59.4" x2="714.00" y2="576" stroke="#fff" stroke-opacity="0.19"/><line x1="729.86" y1="59.4" x2="729.86" y2="576" stroke="#fff" stroke-opacity="0.19"/><line x1="745.72" y1="59.4" x2="745.72" y2="576" stroke="#fff" stroke-opacity="0.19"/><line x1="761.57" y1="59.4" x2="761.57" y2="576" stroke="#fff" stroke-opacity="0.19"/><line x1="777.42" y1="59.4" x2="777.42" y2="576" stroke="#fff" stroke-opacity="0.235"/><line x1="793.28" y1="59.4" x2="793.28" y2="576" stroke="#fff" stroke-opacity="0.19"/><line x1="809.13" y1="59.4" x2="809.13" y2="576" stroke="#fff" stroke-opacity="0.19"/><line x1="824.99" y1="59.4" x2="824.99" y2="576" stroke="#fff" stroke-opacity="0.19"/><line x1="840.85" y1="59.4" x2="840.85" y2="576" stroke="#fff" stroke-opacity="0.19"/><line x1="856.70" y1="59.4" x2="856.70" y2="576" stroke="#fff" stroke-opacity="0.235"/><line x1="872.55" y1="59.4" x2="872.55" y2="576" stroke="#fff" stroke-opacity="0.19"/><line x1="888.41" y1="59.4" x2="888.41" y2="576" stroke="#fff" stroke-opacity="0.19"/><line x1="153" y1="74.73" x2="902.4" y2="74.73" stroke="#fff" stroke-opacity="0.19"/><line x1="153" y1="90.59" x2="902.4" y2="90.59" stroke="#fff" stroke-opacity="0.19"/><line x1="153" y1="106.44" x2="902.4" y2="106.44" stroke="#fff" stroke-opacity="0.19"/><line x1="153" y1="122.30" x2="902.4" y2="122.30" stroke="#fff" stroke-opacity="0.235"/><line x1="153" y1="138.16" x2="902.4" y2="138.16" stroke="#fff" stroke-opacity="0.19"/><line x1="153" y1="154.01" x2="902.4" y2="154.01" stroke="#fff" stroke-opacity="0.19"/><line x1="153" y1="169.87" x2="902.4" y2="169.87" stroke="#fff" stroke-opacity="0.19"/><line x1="153" y1="185.72" x2="902.4" y2="185.72" stroke="#fff" stroke-opacity="0.19"/><line x1="153" y1="201.57" x2="902.4" y2="201.57" stroke="#fff" stroke-opacity="0.235"/><line x1="153" y1="217.43" x2="902.4" y2="217.43" stroke="#fff" stroke-opacity="0.19"/><line x1="153" y1="233.28" x2="902.4" y2="233.28" stroke="#fff" stroke-opacity="0.19"/><line x1="153" y1="249.14" x2="902.4" y2="249.14" stroke="#fff" stroke-opacity="0.19"/><line x1="153" y1="265.00" x2="902.4" y2="265.00" stroke="#fff" stroke-opacity="0.19"/><line x1="153" y1="280.85" x2="902.4" y2="280.85" stroke="#fff" stroke-opacity="0.235"/><line x1="153" y1="296.70" x2="902.4" y2="296.70" stroke="#fff" stroke-opacity="0.19"/><line x1="153" y1="312.56" x2="902.4" y2="312.56" stroke="#fff" stroke-opacity="0.19"/><line x1="153" y1="328.42" x2="902.4" y2="328.42" stroke="#fff" stroke-opacity="0.19"/><line x1="153" y1="344.27" x2="902.4" y2="344.27" stroke="#fff" stroke-opacity="0.19"/><line x1="153" y1="360.12" x2="902.4" y2="360.12" stroke="#fff" stroke-opacity="0.235"/><line x1="153" y1="375.98" x2="902.4" y2="375.98" stroke="#fff" stroke-opacity="0.19"/><line x1="153" y1="391.83" x2="902.4" y2="391.83" stroke="#fff" stroke-opacity="0.19"/><line x1="153" y1="407.69" x2="902.4" y2="407.69" stroke="#fff" stroke-opacity="0.19"/><line x1="153" y1="423.55" x2="902.4" y2="423.55" stroke="#fff" stroke-opacity="0.19"/><line x1="153" y1="439.40" x2="902.4" y2="439.40" stroke="#fff" stroke-opacity="0.235"/><line x1="153" y1="455.25" x2="902.4" y2="455.25" stroke="#fff" stroke-opacity="0.19"/><line x1="153" y1="471.11" x2="902.4" y2="471.11" stroke="#fff" stroke-opacity="0.19"/><line x1="153" y1="486.96" x2="902.4" y2="486.96" stroke="#fff" stroke-opacity="0.19"/><line x1="153" y1="502.82" x2="902.4" y2="502.82" stroke="#fff" stroke-opacity="0.19"/><line x1="153" y1="518.67" x2="902.4" y2="518.67" stroke="#fff" stroke-opacity="0.235"/><line x1="153" y1="534.53" x2="902.4" y2="534.53" stroke="#fff" stroke-opacity="0.19"/><line x1="153" y1="550.38" x2="902.4" y2="550.38" stroke="#fff" stroke-opacity="0.19"/><line x1="153" y1="566.24" x2="902.4" y2="566.24" stroke="#fff" stroke-opacity="0.19"/></g><g font-family="Liberation Sans, sans-serif"><line x1="159.08" y1="56.2" x2="159.08" y2="59.4" stroke="#c3cad8" stroke-width="0.8"/><line x1="167.01" y1="56.2" x2="167.01" y2="59.4" stroke="#c3cad8" stroke-width="0.8"/><line x1="174.94" y1="56.2" x2="174.94" y2="59.4" stroke="#c3cad8" stroke-width="0.8"/><line x1="182.86" y1="52.8" x2="182.86" y2="59.4" stroke="#b4bccb" stroke-width="0.8"/><line x1="190.79" y1="56.2" x2="190.79" y2="59.4" stroke="#c3cad8" stroke-width="0.8"/><line x1="198.72" y1="56.2" x2="198.72" y2="59.4" stroke="#c3cad8" stroke-width="0.8"/><line x1="206.65" y1="56.2" x2="206.65" y2="59.4" stroke="#c3cad8" stroke-width="0.8"/><line x1="214.57" y1="56.2" x2="214.57" y2="59.4" stroke="#c3cad8" stroke-width="0.8"/><line x1="222.50" y1="49" x2="222.50" y2="59.4" stroke="#8b94a6" stroke-width="0.8"/><text x="223.80" y="54.2" font-size="6.5" fill="#1c1c1c" stroke="#1c1c1c" stroke-width="0.25" letter-spacing="-0.25">1500</text><line x1="230.43" y1="56.2" x2="230.43" y2="59.4" stroke="#c3cad8" stroke-width="0.8"/><line x1="238.35" y1="56.2" x2="238.35" y2="59.4" stroke="#c3cad8" stroke-width="0.8"/><line x1="246.28" y1="56.2" x2="246.28" y2="59.4" stroke="#c3cad8" stroke-width="0.8"/><line x1="254.21" y1="56.2" x2="254.21" y2="59.4" stroke="#c3cad8" stroke-width="0.8"/><line x1="262.14" y1="52.8" x2="262.14" y2="59.4" stroke="#b4bccb" stroke-width="0.8"/><line x1="270.06" y1="56.2" x2="270.06" y2="59.4" stroke="#c3cad8" stroke-width="0.8"/><line x1="277.99" y1="56.2" x2="277.99" y2="59.4" stroke="#c3cad8" stroke-width="0.8"/><line x1="285.92" y1="56.2" x2="285.92" y2="59.4" stroke="#c3cad8" stroke-width="0.8"/><line x1="293.85" y1="56.2" x2="293.85" y2="59.4" stroke="#c3cad8" stroke-width="0.8"/><line x1="301.77" y1="49" x2="301.77" y2="59.4" stroke="#8b94a6" stroke-width="0.8"/><text x="303.07" y="54.2" font-size="6.5" fill="#1c1c1c" stroke="#1c1c1c" stroke-width="0.25" letter-spacing="-0.25">2000</text><line x1="309.70" y1="56.2" x2="309.70" y2="59.4" stroke="#c3cad8" stroke-width="0.8"/><line x1="317.63" y1="56.2" x2="317.63" y2="59.4" stroke="#c3cad8" stroke-width="0.8"/><line x1="325.56" y1="56.2" x2="325.56" y2="59.4" stroke="#c3cad8" stroke-width="0.8"/><line x1="333.49" y1="56.2" x2="333.49" y2="59.4" stroke="#c3cad8" stroke-width="0.8"/><line x1="341.41" y1="52.8" x2="341.41" y2="59.4" stroke="#b4bccb" stroke-width="0.8"/><line x1="349.34" y1="56.2" x2="349.34" y2="59.4" stroke="#c3cad8" stroke-width="0.8"/><line x1="357.27" y1="56.2" x2="357.27" y2="59.4" stroke="#c3cad8" stroke-width="0.8"/><line x1="365.19" y1="56.2" x2="365.19" y2="59.4" stroke="#c3cad8" stroke-width="0.8"/><line x1="373.12" y1="56.2" x2="373.12" y2="59.4" stroke="#c3cad8" stroke-width="0.8"/><line x1="381.05" y1="49" x2="381.05" y2="59.4" stroke="#8b94a6" stroke-width="0.8"/><text x="382.35" y="54.2" font-size="6.5" fill="#1c1c1c" stroke="#1c1c1c" stroke-width="0.25" letter-spacing="-0.25">2500</text><line x1="388.98" y1="56.2" x2="388.98" y2="59.4" stroke="#c3cad8" stroke-width="0.8"/><line x1="396.90" y1="56.2" x2="396.90" y2="59.4" stroke="#c3cad8" stroke-width="0.8"/><line x1="404.83" y1="56.2" x2="404.83" y2="59.4" stroke="#c3cad8" stroke-width="0.8"/><line x1="412.76" y1="56.2" x2="412.76" y2="59.4" stroke="#c3cad8" stroke-width="0.8"/><line x1="420.69" y1="52.8" x2="420.69" y2="59.4" stroke="#b4bccb" stroke-width="0.8"/><line x1="428.62" y1="56.2" x2="428.62" y2="59.4" stroke="#c3cad8" stroke-width="0.8"/><line x1="436.54" y1="56.2" x2="436.54" y2="59.4" stroke="#c3cad8" stroke-width="0.8"/><line x1="444.47" y1="56.2" x2="444.47" y2="59.4" stroke="#c3cad8" stroke-width="0.8"/><line x1="452.40" y1="56.2" x2="452.40" y2="59.4" stroke="#c3cad8" stroke-width="0.8"/><line x1="460.32" y1="49" x2="460.32" y2="59.4" stroke="#8b94a6" stroke-width="0.8"/><text x="461.62" y="54.2" font-size="6.5" fill="#1c1c1c" stroke="#1c1c1c" stroke-width="0.25" letter-spacing="-0.25">3000</text><line x1="468.25" y1="56.2" x2="468.25" y2="59.4" stroke="#c3cad8" stroke-width="0.8"/><line x1="476.18" y1="56.2" x2="476.18" y2="59.4" stroke="#c3cad8" stroke-width="0.8"/><line x1="484.11" y1="56.2" x2="484.11" y2="59.4" stroke="#c3cad8" stroke-width="0.8"/><line x1="492.03" y1="56.2" x2="492.03" y2="59.4" stroke="#c3cad8" stroke-width="0.8"/><line x1="499.96" y1="52.8" x2="499.96" y2="59.4" stroke="#b4bccb" stroke-width="0.8"/><line x1="507.89" y1="56.2" x2="507.89" y2="59.4" stroke="#c3cad8" stroke-width="0.8"/><line x1="515.82" y1="56.2" x2="515.82" y2="59.4" stroke="#c3cad8" stroke-width="0.8"/><line x1="523.75" y1="56.2" x2="523.75" y2="59.4" stroke="#c3cad8" stroke-width="0.8"/><line x1="531.67" y1="56.2" x2="531.67" y2="59.4" stroke="#c3cad8" stroke-width="0.8"/><line x1="539.60" y1="49" x2="539.60" y2="59.4" stroke="#8b94a6" stroke-width="0.8"/><text x="540.90" y="54.2" font-size="6.5" fill="#1c1c1c" stroke="#1c1c1c" stroke-width="0.25" letter-spacing="-0.25">3500</text><line x1="547.53" y1="56.2" x2="547.53" y2="59.4" stroke="#c3cad8" stroke-width="0.8"/><line x1="555.45" y1="56.2" x2="555.45" y2="59.4" stroke="#c3cad8" stroke-width="0.8"/><line x1="563.38" y1="56.2" x2="563.38" y2="59.4" stroke="#c3cad8" stroke-width="0.8"/><line x1="571.31" y1="56.2" x2="571.31" y2="59.4" stroke="#c3cad8" stroke-width="0.8"/><line x1="579.24" y1="52.8" x2="579.24" y2="59.4" stroke="#b4bccb" stroke-width="0.8"/><line x1="587.16" y1="56.2" x2="587.16" y2="59.4" stroke="#c3cad8" stroke-width="0.8"/><line x1="595.09" y1="56.2" x2="595.09" y2="59.4" stroke="#c3cad8" stroke-width="0.8"/><line x1="603.02" y1="56.2" x2="603.02" y2="59.4" stroke="#c3cad8" stroke-width="0.8"/><line x1="610.95" y1="56.2" x2="610.95" y2="59.4" stroke="#c3cad8" stroke-width="0.8"/><line x1="618.88" y1="49" x2="618.88" y2="59.4" stroke="#8b94a6" stroke-width="0.8"/><text x="620.17" y="54.2" font-size="6.5" fill="#1c1c1c" stroke="#1c1c1c" stroke-width="0.25" letter-spacing="-0.25">4000</text><line x1="626.80" y1="56.2" x2="626.80" y2="59.4" stroke="#c3cad8" stroke-width="0.8"/><line x1="634.73" y1="56.2" x2="634.73" y2="59.4" stroke="#c3cad8" stroke-width="0.8"/><line x1="642.66" y1="56.2" x2="642.66" y2="59.4" stroke="#c3cad8" stroke-width="0.8"/><line x1="650.59" y1="56.2" x2="650.59" y2="59.4" stroke="#c3cad8" stroke-width="0.8"/><line x1="658.51" y1="52.8" x2="658.51" y2="59.4" stroke="#b4bccb" stroke-width="0.8"/><line x1="666.44" y1="56.2" x2="666.44" y2="59.4" stroke="#c3cad8" stroke-width="0.8"/><line x1="674.37" y1="56.2" x2="674.37" y2="59.4" stroke="#c3cad8" stroke-width="0.8"/><line x1="682.30" y1="56.2" x2="682.30" y2="59.4" stroke="#c3cad8" stroke-width="0.8"/><line x1="690.22" y1="56.2" x2="690.22" y2="59.4" stroke="#c3cad8" stroke-width="0.8"/><line x1="698.15" y1="49" x2="698.15" y2="59.4" stroke="#8b94a6" stroke-width="0.8"/><text x="699.45" y="54.2" font-size="6.5" fill="#1c1c1c" stroke="#1c1c1c" stroke-width="0.25" letter-spacing="-0.25">4500</text><line x1="706.08" y1="56.2" x2="706.08" y2="59.4" stroke="#c3cad8" stroke-width="0.8"/><line x1="714.00" y1="56.2" x2="714.00" y2="59.4" stroke="#c3cad8" stroke-width="0.8"/><line x1="721.93" y1="56.2" x2="721.93" y2="59.4" stroke="#c3cad8" stroke-width="0.8"/><line x1="729.86" y1="56.2" x2="729.86" y2="59.4" stroke="#c3cad8" stroke-width="0.8"/><line x1="737.79" y1="52.8" x2="737.79" y2="59.4" stroke="#b4bccb" stroke-width="0.8"/><line x1="745.72" y1="56.2" x2="745.72" y2="59.4" stroke="#c3cad8" stroke-width="0.8"/><line x1="753.64" y1="56.2" x2="753.64" y2="59.4" stroke="#c3cad8" stroke-width="0.8"/><line x1="761.57" y1="56.2" x2="761.57" y2="59.4" stroke="#c3cad8" stroke-width="0.8"/><line x1="769.50" y1="56.2" x2="769.50" y2="59.4" stroke="#c3cad8" stroke-width="0.8"/><line x1="777.42" y1="49" x2="777.42" y2="59.4" stroke="#8b94a6" stroke-width="0.8"/><text x="778.72" y="54.2" font-size="6.5" fill="#1c1c1c" stroke="#1c1c1c" stroke-width="0.25" letter-spacing="-0.25">5000</text><line x1="785.35" y1="56.2" x2="785.35" y2="59.4" stroke="#c3cad8" stroke-width="0.8"/><line x1="793.28" y1="56.2" x2="793.28" y2="59.4" stroke="#c3cad8" stroke-width="0.8"/><line x1="801.21" y1="56.2" x2="801.21" y2="59.4" stroke="#c3cad8" stroke-width="0.8"/><line x1="809.13" y1="56.2" x2="809.13" y2="59.4" stroke="#c3cad8" stroke-width="0.8"/><line x1="817.06" y1="52.8" x2="817.06" y2="59.4" stroke="#b4bccb" stroke-width="0.8"/><line x1="824.99" y1="56.2" x2="824.99" y2="59.4" stroke="#c3cad8" stroke-width="0.8"/><line x1="832.92" y1="56.2" x2="832.92" y2="59.4" stroke="#c3cad8" stroke-width="0.8"/><line x1="840.85" y1="56.2" x2="840.85" y2="59.4" stroke="#c3cad8" stroke-width="0.8"/><line x1="848.77" y1="56.2" x2="848.77" y2="59.4" stroke="#c3cad8" stroke-width="0.8"/><line x1="856.70" y1="49" x2="856.70" y2="59.4" stroke="#8b94a6" stroke-width="0.8"/><text x="858.00" y="54.2" font-size="6.5" fill="#1c1c1c" stroke="#1c1c1c" stroke-width="0.25" letter-spacing="-0.25">5500</text><line x1="864.63" y1="56.2" x2="864.63" y2="59.4" stroke="#c3cad8" stroke-width="0.8"/><line x1="872.55" y1="56.2" x2="872.55" y2="59.4" stroke="#c3cad8" stroke-width="0.8"/><line x1="880.48" y1="56.2" x2="880.48" y2="59.4" stroke="#c3cad8" stroke-width="0.8"/><line x1="888.41" y1="56.2" x2="888.41" y2="59.4" stroke="#c3cad8" stroke-width="0.8"/><line x1="896.34" y1="52.8" x2="896.34" y2="59.4" stroke="#b4bccb" stroke-width="0.8"/><line x1="149.6" y1="66.81" x2="153" y2="66.81" stroke="#c3cad8" stroke-width="0.8"/><line x1="149.6" y1="74.73" x2="153" y2="74.73" stroke="#c3cad8" stroke-width="0.8"/><line x1="146" y1="82.66" x2="153" y2="82.66" stroke="#b4bccb" stroke-width="0.8"/><line x1="149.6" y1="90.59" x2="153" y2="90.59" stroke="#c3cad8" stroke-width="0.8"/><line x1="149.6" y1="98.52" x2="153" y2="98.52" stroke="#c3cad8" stroke-width="0.8"/><line x1="149.6" y1="106.44" x2="153" y2="106.44" stroke="#c3cad8" stroke-width="0.8"/><line x1="149.6" y1="114.37" x2="153" y2="114.37" stroke="#c3cad8" stroke-width="0.8"/><line x1="143" y1="122.30" x2="153" y2="122.30" stroke="#8b94a6" stroke-width="0.8"/><text transform="translate(143.0,123.10) rotate(90)" font-size="6.5" fill="#1c1c1c" stroke="#1c1c1c" stroke-width="0.25" letter-spacing="-0.25">1000</text><line x1="149.6" y1="130.23" x2="153" y2="130.23" stroke="#c3cad8" stroke-width="0.8"/><line x1="149.6" y1="138.16" x2="153" y2="138.16" stroke="#c3cad8" stroke-width="0.8"/><line x1="149.6" y1="146.08" x2="153" y2="146.08" stroke="#c3cad8" stroke-width="0.8"/><line x1="149.6" y1="154.01" x2="153" y2="154.01" stroke="#c3cad8" stroke-width="0.8"/><line x1="146" y1="161.94" x2="153" y2="161.94" stroke="#b4bccb" stroke-width="0.8"/><line x1="149.6" y1="169.87" x2="153" y2="169.87" stroke="#c3cad8" stroke-width="0.8"/><line x1="149.6" y1="177.79" x2="153" y2="177.79" stroke="#c3cad8" stroke-width="0.8"/><line x1="149.6" y1="185.72" x2="153" y2="185.72" stroke="#c3cad8" stroke-width="0.8"/><line x1="149.6" y1="193.65" x2="153" y2="193.65" stroke="#c3cad8" stroke-width="0.8"/><line x1="143" y1="201.57" x2="153" y2="201.57" stroke="#8b94a6" stroke-width="0.8"/><text transform="translate(143.0,202.38) rotate(90)" font-size="6.5" fill="#1c1c1c" stroke="#1c1c1c" stroke-width="0.25" letter-spacing="-0.25">1500</text><line x1="149.6" y1="209.50" x2="153" y2="209.50" stroke="#c3cad8" stroke-width="0.8"/><line x1="149.6" y1="217.43" x2="153" y2="217.43" stroke="#c3cad8" stroke-width="0.8"/><line x1="149.6" y1="225.36" x2="153" y2="225.36" stroke="#c3cad8" stroke-width="0.8"/><line x1="149.6" y1="233.28" x2="153" y2="233.28" stroke="#c3cad8" stroke-width="0.8"/><line x1="146" y1="241.21" x2="153" y2="241.21" stroke="#b4bccb" stroke-width="0.8"/><line x1="149.6" y1="249.14" x2="153" y2="249.14" stroke="#c3cad8" stroke-width="0.8"/><line x1="149.6" y1="257.07" x2="153" y2="257.07" stroke="#c3cad8" stroke-width="0.8"/><line x1="149.6" y1="265.00" x2="153" y2="265.00" stroke="#c3cad8" stroke-width="0.8"/><line x1="149.6" y1="272.92" x2="153" y2="272.92" stroke="#c3cad8" stroke-width="0.8"/><line x1="143" y1="280.85" x2="153" y2="280.85" stroke="#8b94a6" stroke-width="0.8"/><text transform="translate(143.0,281.65) rotate(90)" font-size="6.5" fill="#1c1c1c" stroke="#1c1c1c" stroke-width="0.25" letter-spacing="-0.25">2000</text><line x1="149.6" y1="288.78" x2="153" y2="288.78" stroke="#c3cad8" stroke-width="0.8"/><line x1="149.6" y1="296.70" x2="153" y2="296.70" stroke="#c3cad8" stroke-width="0.8"/><line x1="149.6" y1="304.63" x2="153" y2="304.63" stroke="#c3cad8" stroke-width="0.8"/><line x1="149.6" y1="312.56" x2="153" y2="312.56" stroke="#c3cad8" stroke-width="0.8"/><line x1="146" y1="320.49" x2="153" y2="320.49" stroke="#b4bccb" stroke-width="0.8"/><line x1="149.6" y1="328.42" x2="153" y2="328.42" stroke="#c3cad8" stroke-width="0.8"/><line x1="149.6" y1="336.34" x2="153" y2="336.34" stroke="#c3cad8" stroke-width="0.8"/><line x1="149.6" y1="344.27" x2="153" y2="344.27" stroke="#c3cad8" stroke-width="0.8"/><line x1="149.6" y1="352.20" x2="153" y2="352.20" stroke="#c3cad8" stroke-width="0.8"/><line x1="143" y1="360.12" x2="153" y2="360.12" stroke="#8b94a6" stroke-width="0.8"/><text transform="translate(143.0,360.93) rotate(90)" font-size="6.5" fill="#1c1c1c" stroke="#1c1c1c" stroke-width="0.25" letter-spacing="-0.25">2500</text><line x1="149.6" y1="368.05" x2="153" y2="368.05" stroke="#c3cad8" stroke-width="0.8"/><line x1="149.6" y1="375.98" x2="153" y2="375.98" stroke="#c3cad8" stroke-width="0.8"/><line x1="149.6" y1="383.91" x2="153" y2="383.91" stroke="#c3cad8" stroke-width="0.8"/><line x1="149.6" y1="391.83" x2="153" y2="391.83" stroke="#c3cad8" stroke-width="0.8"/><line x1="146" y1="399.76" x2="153" y2="399.76" stroke="#b4bccb" stroke-width="0.8"/><line x1="149.6" y1="407.69" x2="153" y2="407.69" stroke="#c3cad8" stroke-width="0.8"/><line x1="149.6" y1="415.62" x2="153" y2="415.62" stroke="#c3cad8" stroke-width="0.8"/><line x1="149.6" y1="423.55" x2="153" y2="423.55" stroke="#c3cad8" stroke-width="0.8"/><line x1="149.6" y1="431.47" x2="153" y2="431.47" stroke="#c3cad8" stroke-width="0.8"/><line x1="143" y1="439.40" x2="153" y2="439.40" stroke="#8b94a6" stroke-width="0.8"/><text transform="translate(143.0,440.20) rotate(90)" font-size="6.5" fill="#1c1c1c" stroke="#1c1c1c" stroke-width="0.25" letter-spacing="-0.25">3000</text><line x1="149.6" y1="447.33" x2="153" y2="447.33" stroke="#c3cad8" stroke-width="0.8"/><line x1="149.6" y1="455.25" x2="153" y2="455.25" stroke="#c3cad8" stroke-width="0.8"/><line x1="149.6" y1="463.18" x2="153" y2="463.18" stroke="#c3cad8" stroke-width="0.8"/><line x1="149.6" y1="471.11" x2="153" y2="471.11" stroke="#c3cad8" stroke-width="0.8"/><line x1="146" y1="479.04" x2="153" y2="479.04" stroke="#b4bccb" stroke-width="0.8"/><line x1="149.6" y1="486.96" x2="153" y2="486.96" stroke="#c3cad8" stroke-width="0.8"/><line x1="149.6" y1="494.89" x2="153" y2="494.89" stroke="#c3cad8" stroke-width="0.8"/><line x1="149.6" y1="502.82" x2="153" y2="502.82" stroke="#c3cad8" stroke-width="0.8"/><line x1="149.6" y1="510.75" x2="153" y2="510.75" stroke="#c3cad8" stroke-width="0.8"/><line x1="143" y1="518.67" x2="153" y2="518.67" stroke="#8b94a6" stroke-width="0.8"/><text transform="translate(143.0,519.47) rotate(90)" font-size="6.5" fill="#1c1c1c" stroke="#1c1c1c" stroke-width="0.25" letter-spacing="-0.25">3500</text><line x1="149.6" y1="526.60" x2="153" y2="526.60" stroke="#c3cad8" stroke-width="0.8"/><line x1="149.6" y1="534.53" x2="153" y2="534.53" stroke="#c3cad8" stroke-width="0.8"/><line x1="149.6" y1="542.46" x2="153" y2="542.46" stroke="#c3cad8" stroke-width="0.8"/><line x1="149.6" y1="550.38" x2="153" y2="550.38" stroke="#c3cad8" stroke-width="0.8"/><line x1="146" y1="558.31" x2="153" y2="558.31" stroke="#b4bccb" stroke-width="0.8"/><line x1="149.6" y1="566.24" x2="153" y2="566.24" stroke="#c3cad8" stroke-width="0.8"/><line x1="149.6" y1="574.17" x2="153" y2="574.17" stroke="#c3cad8" stroke-width="0.8"/></g><line x1="503.4" y1="49" x2="503.4" y2="59.4" stroke="#3c6fd0" stroke-width="0.9"/><line x1="143" y1="293.6" x2="153" y2="293.6" stroke="#6d95d6" stroke-width="0.9"/><g clip-path="url(#cv)" font-family="Liberation Sans, sans-serif"><text transform="translate(413.8,121.89999999999999) scale(0.86,1)" x="0" y="0" font-size="10.6" fill="#cfbb1c" stroke="#cfbb1c" stroke-width="0.2" text-anchor="middle">R1</text><circle cx="388.7" cy="133.2" r="5.7" fill="#a9a9a9"/><circle cx="388.7" cy="133.2" r="2.4" fill="#262626"/><circle cx="436.6" cy="133.2" r="5.7" fill="#a9a9a9"/><circle cx="436.6" cy="133.2" r="2.4" fill="#262626"/><rect x="396.6" y="128.7" width="32.19999999999999" height="9.700000000000017" rx="0.8" fill="none" stroke="#cfbb1c" stroke-width="1.6"/><line x1="394.4" y1="133.2" x2="396.6" y2="133.2" stroke="#cfbb1c" stroke-width="1.0"/><line x1="428.8" y1="133.2" x2="431" y2="133.2" stroke="#cfbb1c" stroke-width="1.0"/><text transform="translate(425.8,256.90000000000003) scale(0.86,1)" x="0" y="0" font-size="10.6" fill="#cfbb1c" stroke="#cfbb1c" stroke-width="0.2" text-anchor="middle">R2</text><circle cx="399.9" cy="268.2" r="5.7" fill="#a9a9a9"/><circle cx="399.9" cy="268.2" r="2.4" fill="#262626"/><circle cx="447.3" cy="268.2" r="5.7" fill="#a9a9a9"/><circle cx="447.3" cy="268.2" r="2.4" fill="#262626"/><rect x="407.4" y="263.2" width="32.80000000000001" height="10.0" rx="0.8" fill="none" stroke="#cfbb1c" stroke-width="1.6"/><line x1="405.4" y1="268.2" x2="407.4" y2="268.2" stroke="#cfbb1c" stroke-width="1.0"/><line x1="440.2" y1="268.2" x2="442.2" y2="268.2" stroke="#cfbb1c" stroke-width="1.0"/><text transform="translate(577,122.39999999999999) scale(0.86,1)" x="0" y="0" font-size="10.6" fill="#cfbb1c" stroke="#cfbb1c" stroke-width="0.2" text-anchor="middle">C1</text><rect x="559" y="127" width="30.399999999999977" height="16" rx="1.5" fill="none" stroke="#cfbb1c" stroke-width="1.6"/><rect x="561.1999999999999" y="129.9" width="10.2" height="10.2" fill="#a9a9a9"/><circle cx="566.3" cy="135" r="2.5" fill="#262626"/><rect x="576.6999999999999" y="129.9" width="10.2" height="10.2" fill="#a9a9a9"/><circle cx="581.8" cy="135" r="2.5" fill="#262626"/><line x1="572.4" y1="129.8" x2="572.4" y2="140.4" stroke="#cfbb1c" stroke-width="1.5"/><line x1="575.9" y1="129.8" x2="575.9" y2="140.4" stroke="#cfbb1c" stroke-width="1.5"/><text transform="translate(632,124.0) scale(0.86,1)" x="0" y="0" font-size="10.6" fill="#cfbb1c" stroke="#cfbb1c" stroke-width="0.2" text-anchor="middle">C2</text><rect x="615.7" y="128.7" width="30.799999999999955" height="16.0" rx="1.5" fill="none" stroke="#cfbb1c" stroke-width="1.6"/><rect x="618.1" y="131.70000000000002" width="10.2" height="10.2" fill="#a9a9a9"/><circle cx="623.2" cy="136.8" r="2.5" fill="#262626"/><rect x="633.9" y="131.70000000000002" width="10.2" height="10.2" fill="#a9a9a9"/><circle cx="639" cy="136.8" r="2.5" fill="#262626"/><line x1="629.3" y1="131.4" x2="629.3" y2="142.2" stroke="#cfbb1c" stroke-width="1.5"/><line x1="632.8" y1="131.4" x2="632.8" y2="142.2" stroke="#cfbb1c" stroke-width="1.5"/><circle cx="506" cy="196.6" r="5.0" fill="#a9a9a9"/><circle cx="506" cy="196.6" r="2.0" fill="#262626"/><circle cx="506" cy="243.7" r="5.0" fill="#a9a9a9"/><circle cx="506" cy="243.7" r="2.0" fill="#262626"/><circle cx="522" cy="196.6" r="5.0" fill="#a9a9a9"/><circle cx="522" cy="196.6" r="2.0" fill="#262626"/><circle cx="522" cy="243.7" r="5.0" fill="#a9a9a9"/><circle cx="522" cy="243.7" r="2.0" fill="#262626"/><circle cx="537.6" cy="196.6" r="5.0" fill="#a9a9a9"/><circle cx="537.6" cy="196.6" r="2.0" fill="#262626"/><circle cx="537.6" cy="243.7" r="5.0" fill="#a9a9a9"/><circle cx="537.6" cy="243.7" r="2.0" fill="#262626"/><circle cx="553.5" cy="196.6" r="5.0" fill="#a9a9a9"/><circle cx="553.5" cy="196.6" r="2.0" fill="#262626"/><circle cx="553.5" cy="243.7" r="5.0" fill="#a9a9a9"/><circle cx="553.5" cy="243.7" r="2.0" fill="#262626"/><path d="M498 202.2 H562 V238.4 H498 V227.3 A6.8 6.8 0 0 0 498 213.7 Z" fill="none" stroke="#cfbb1c" stroke-width="1.6"/><text transform="translate(482.4,220.5) rotate(-90) scale(1.0,1)" x="0" y="0" font-size="10.4" fill="#cfbb1c" stroke="#cfbb1c" stroke-width="0.2" text-anchor="middle">NE555P</text><text transform="translate(661.2,188.9) scale(0.86,1)" x="0" y="0" font-size="10.6" fill="#cfbb1c" stroke="#cfbb1c" stroke-width="0.2" text-anchor="middle">D1</text><circle cx="632.6" cy="201.4" r="5.7" fill="#a9a9a9"/><circle cx="632.6" cy="201.4" r="2.4" fill="#262626"/><circle cx="680" cy="201.4" r="5.7" fill="#a9a9a9"/><circle cx="680" cy="201.4" r="2.4" fill="#262626"/><rect x="640" y="193.7" width="32.39999999999998" height="15.300000000000011" rx="0.8" fill="none" stroke="#cfbb1c" stroke-width="1.6"/><line x1="668.2" y1="193.7" x2="668.2" y2="209" stroke="#cfbb1c" stroke-width="1.1"/><text transform="translate(658.4,225.6) scale(0.86,1)" x="0" y="0" font-size="10.6" fill="#cfbb1c" stroke="#cfbb1c" stroke-width="0.2" text-anchor="middle">D2</text><circle cx="629.7" cy="238.1" r="5.7" fill="#a9a9a9"/><circle cx="629.7" cy="238.1" r="2.4" fill="#262626"/><circle cx="677.2" cy="238.1" r="5.7" fill="#a9a9a9"/><circle cx="677.2" cy="238.1" r="2.4" fill="#262626"/><rect x="637.3" y="230.5" width="32.30000000000007" height="14.800000000000011" rx="0.8" fill="none" stroke="#cfbb1c" stroke-width="1.6"/><line x1="665.4" y1="230.5" x2="665.4" y2="245.3" stroke="#cfbb1c" stroke-width="1.1"/><text transform="translate(608,257.20000000000005) scale(0.86,1)" x="0" y="0" font-size="10.6" fill="#cfbb1c" stroke="#cfbb1c" stroke-width="0.2" text-anchor="middle">D3</text><circle cx="578.7" cy="270" r="5.7" fill="#a9a9a9"/><circle cx="578.7" cy="270" r="2.4" fill="#262626"/><circle cx="626.2" cy="270" r="5.7" fill="#a9a9a9"/><circle cx="626.2" cy="270" r="2.4" fill="#262626"/><rect x="586.6" y="262.4" width="32.0" height="14.800000000000011" rx="0.8" fill="none" stroke="#cfbb1c" stroke-width="1.6"/><line x1="614.6" y1="262.4" x2="614.6" y2="277.2" stroke="#cfbb1c" stroke-width="1.1"/><text transform="translate(508.4,273.6) scale(0.86,1)" x="0" y="0" font-size="10.6" fill="#cfbb1c" stroke="#cfbb1c" stroke-width="0.2" text-anchor="middle">Q?</text><rect x="470.9" y="278" width="65.39999999999998" height="28.30000000000001" rx="0.5" fill="none" stroke="#cfbb1c" stroke-width="1.6"/><line x1="470.9" y1="283.8" x2="536.3" y2="283.8" stroke="#cfbb1c" stroke-width="1.6"/><rect x="481.40000000000003" y="288.20000000000005" width="10.8" height="10.8" fill="#a9a9a9"/><circle cx="486.8" cy="293.6" r="3.2" fill="#262626"/><circle cx="502.8" cy="293.6" r="5.7" fill="#a9a9a9"/><circle cx="502.8" cy="293.6" r="3.5" fill="#262626"/><circle cx="518.8" cy="293.6" r="5.7" fill="#a9a9a9"/><circle cx="518.8" cy="293.6" r="3.5" fill="#262626"/></g><line x1="503.4" y1="59.4" x2="503.4" y2="576" stroke="#801d1d" stroke-width="0.85" stroke-dasharray="1.5 0.8" opacity="0.9"/><line x1="153" y1="293.6" x2="902.4" y2="293.6" stroke="#801d1d" stroke-width="0.85" stroke-dasharray="1.5 0.8" opacity="0.9"/><path d="M503.6 291.6 L503.6 301.4 L505.8 299.3 L507.4 302.8 L508.8 302.2 L507.3 298.8 L510.2 298.6 Z" fill="#fff" stroke="#222" stroke-width="0.5"/></svg>
<div class="abs" style="left:903px;top:30.6px;width:7.4px;height:546px;background:#f4f8ff"></div>
<div id="rp"></div>
<div class="abs" style="left:911.4px;top:31px;width:108.8px;height:16.4px;background:#cad7fb"></div>
<div class="t" style="left:917.4px;top:31.2px;font-size:7.05px;color:#333;line-height:7.6px;white-space:normal;width:40px">Selected Objects</div>
<div class="t" style="left:972.4px;top:35.4px;font-size:7.6px;color:#777">0</div>
<div class="rh" style="top:47.4px;height:17.6px"></div>
<svg class="abs" style="left:912.8px;top:54.0px" width="4" height="4" viewBox="0 0 4 4"><path d="M3.6 0.4 V3.6 H0.4 Z" fill="#333"/></svg>
<div class="t" style="left:918.6px;top:52.6px;font-size:7.3px;color:#2b2b2b">Canvas Attributes</div>
<div class="rr" style="top:65px;height:15px"></div>
<div class="rsep" style="top:65px;height:15px"></div>
<div class="rk" style="top:68.8px">Units</div>
<div class="rv" style="top:68.6px;left:974.6px;width:35px;overflow:hidden">mil</div>
<div class="rdd" style="top:71.3px"></div>
<div class="rr" style="top:80px;height:14.6px"></div>
<div class="rsep" style="top:80px;height:14.6px"></div>
<div class="rk" style="top:83.6px">Background</div>
<div class="abs" style="left:972px;top:81px;width:47.8px;height:12.2px;background:#000"></div>
<div class="rv" style="top:83.5px;color:#fff;left:972.2px">#000000</div>
<div class="rh" style="top:94.6px;height:14.6px"></div>
<svg class="abs" style="left:912.8px;top:99.69999999999999px" width="4" height="4" viewBox="0 0 4 4"><path d="M3.6 0.4 V3.6 H0.4 Z" fill="#333"/></svg>
<div class="t" style="left:918.6px;top:98.3px;font-size:7.3px;color:#2b2b2b">Grid</div>
<div class="rr" style="top:109.2px;height:15px"></div>
<div class="rsep" style="top:109.2px;height:15px"></div>
<div class="rk" style="top:113.0px">Visible Grid</div>
<div class="rv" style="top:112.8px;left:974.6px;width:35px;overflow:hidden">Yes</div>
<div class="rdd" style="top:115.5px"></div>
<div class="rr" style="top:124.2px;height:14.8px"></div>
<div class="rsep" style="top:124.2px;height:14.8px"></div>
<div class="rk" style="top:127.89999999999999px">Grid Color</div>
<div class="rv" style="top:127.8px">#FFFFFF</div>
<div class="rr" style="top:139px;height:15.3px"></div>
<div class="rsep" style="top:139px;height:15.3px"></div>
<div class="rk" style="top:142.95000000000002px">Grid Style</div>
<div class="rv" style="top:142.75px;left:974.6px;width:35px;overflow:hidden">line</div>
<div class="rdd" style="top:145.45000000000002px"></div>
<div class="rr" style="top:154.3px;height:15px"></div>
<div class="rsep" style="top:154.3px;height:15px"></div>
<div class="rk" style="top:158.10000000000002px">Snap</div>
<div class="rv" style="top:157.9px;left:974.6px;width:35px;overflow:hidden">Yes</div>
<div class="rdd" style="top:160.60000000000002px"></div>
<div class="rr" style="top:169.3px;height:14.9px"></div>
<div class="rsep" style="top:169.3px;height:14.9px"></div>
<div class="rk" style="top:173.05px">Grid Size</div>
<div class="rin" style="top:170.3px;height:12.5px"></div>
<div class="rv" style="top:172.95px">100mil</div>
<div class="rr" style="top:184.2px;height:14.9px"></div>
<div class="rsep" style="top:184.2px;height:14.9px"></div>
<div class="rk" style="top:187.95px">Snap Size</div>
<div class="rin" style="top:185.2px;height:12.5px"></div>
<div class="rv" style="top:187.84999999999997px">10mil</div>
<div class="rr" style="top:199.1px;height:14.9px"></div>
<div class="rsep" style="top:199.1px;height:14.9px"></div>
<div class="rk" style="top:202.85px">Alt Snap</div>
<div class="rin" style="top:200.1px;height:12.5px"></div>
<div class="rv" style="top:202.74999999999997px">5mil</div>
<div class="rh" style="top:214px;height:14.6px"></div>
<svg class="abs" style="left:912.8px;top:219.10000000000002px" width="4" height="4" viewBox="0 0 4 4"><path d="M3.6 0.4 V3.6 H0.4 Z" fill="#333"/></svg>
<div class="t" style="left:918.6px;top:217.70000000000002px;font-size:7.3px;color:#2b2b2b">Other</div>
<div class="rr" style="top:228.6px;height:15.2px"></div>
<div class="rsep" style="top:228.6px;height:15.2px"></div>
<div class="rk" style="top:232.5px">Routing Width</div>
<div class="rin" style="top:229.6px;height:12.799999999999999px"></div>
<div class="rv" style="top:232.39999999999998px">10mil</div>
<div class="rr" style="top:243.8px;height:14.9px"></div>
<div class="rsep" style="top:243.8px;height:14.9px"></div>
<div class="rk" style="top:247.55px">Route Angle</div>
<div class="rv" style="top:247.35px;left:974.6px;width:35px;overflow:hidden">45 degree</div>
<div class="rdd" style="top:250.05px"></div>
<div class="rr" style="top:258.7px;height:14.9px"></div>
<div class="rsep" style="top:258.7px;height:14.9px"></div>
<div class="rk" style="top:262.45px">Copper Zone</div>
<div class="rv" style="top:262.25px;left:974.6px;width:35px;overflow:hidden">Visible</div>
<div class="rdd" style="top:264.95px"></div>
<div class="abs" style="left:911.4px;top:273.6px;width:108.8px;height:17.8px;background:#e9f1fe"></div>
<svg class="abs" style="left:914.6px;top:278.2px;overflow:visible" width="9" height="8" viewBox="0 0 9 8"><path d="M2.4 1.4 H0.7 V7.3 H8 V1.4 H4.6" fill="none" stroke="#3c9a3c" stroke-width="1.1"/><path d="M3.5 -0.6 V3.2 M1.6 1.3 H5.4" stroke="#3c9a3c" stroke-width="1"/></svg>
<div class="t" style="left:927px;top:279.6px;font-size:7.2px;color:#444">Add new parameter</div>
<div class="abs" style="left:911.4px;top:291.4px;width:108.8px;height:59.6px;background:#cdd9fb"></div>
<div class="t" style="left:916.6px;top:294.3px;font-size:7.2px;font-weight:bold;color:#2e3246;letter-spacing:-0.1px">Mouse-X</div>
<div class="t" style="left:972.4px;top:294.1px;font-size:7.5px;color:#666">3272.96mil</div>
<div class="t" style="left:916.6px;top:309.3px;font-size:7.2px;font-weight:bold;color:#2e3246;letter-spacing:-0.1px">Mouse-Y</div>
<div class="t" style="left:972.4px;top:309.1px;font-size:7.5px;color:#666">2075.19mil</div>
<div class="t" style="left:916.6px;top:324.3px;font-size:7.2px;font-weight:bold;color:#2e3246;letter-spacing:-0.1px">Mouse-DX</div>
<div class="t" style="left:972.4px;top:324.1px;font-size:7.5px;color:#666">437.03mil</div>
<div class="t" style="left:916.6px;top:339.3px;font-size:7.2px;font-weight:bold;color:#2e3246;letter-spacing:-0.1px">Mouse-DY</div>
<div class="t" style="left:972.4px;top:339.1px;font-size:7.5px;color:#666">518.52mil</div>
<div class="fp" style="left:669px;top:1.6px;width:90px;height:59.4px">
<div class="fph"></div><div class="fpt">PCB Tools</div>
<div class="abs" style="left:80.6px;top:5.4px;width:5.6px;height:1.5px;background:#222"></div>
<svg class="abs" style="left:0;top:0;overflow:visible" width="90" height="59" viewBox="0 0 90 59"><g transform="translate(9.3,22.6)"><path d="M-3.8 -2.9 H-1.9 V2.6 H1.4" fill="none" stroke="#222" stroke-width="1"/><circle cx="-4.6" cy="-3" r="0.95" fill="#fff" stroke="#222" stroke-width="0.7"/><circle cx="2.9" cy="2.7" r="1.25" fill="#fff" stroke="#222" stroke-width="0.7"/></g><g transform="translate(23.6,22.6)"><circle cx="0" cy="0" r="3.4" fill="#fff" stroke="#111" stroke-width="2.2"/></g><g transform="translate(37.4,22.6)"><circle cx="-1.7" cy="-1.9" r="2.3" fill="#fff" stroke="#222" stroke-width="1.25"/><path d="M0.7 -2 H5.2 M-1.7 0.5 V4.8" stroke="#222" stroke-width="1.25"/></g><g transform="translate(51.7,22.6)"><text x="0" y="3.8" text-anchor="middle" font-family="Liberation Serif, serif" font-weight="bold" font-size="11" fill="#fff" stroke="#222" stroke-width="0.7">T</text></g><g transform="translate(65.8,22.6)"><path d="M4.2 -2.2 A4.8 4.8 0 1 0 1.6 4.4" fill="none" stroke="#444" stroke-width="0.9"/><path d="M0 0 L4.2 -2.2 M0 0 L1.6 4.4" stroke="#bbb" stroke-width="0.5" stroke-dasharray="0.8 0.8"/></g><g transform="translate(79.8,22.6)"><path d="M4.8 0.4 A4.8 4.8 0 1 0 0.8 4.7" fill="none" stroke="#444" stroke-width="0.9"/><path d="M-0.2 0 H1.8 M0.8 -1 V1" stroke="#666" stroke-width="0.5"/><circle cx="4.8" cy="0.4" r="0.6" fill="#888"/></g><g transform="translate(9.3,36.7)"><circle cx="0" cy="0" r="4.6" fill="#fff" stroke="#333" stroke-width="0.85"/></g><g transform="translate(23.6,36.7)"><path d="M-3.6 0.4 C-4.4 -0.6 -3.2 -1.6 -2.4 -0.8 L-1.8 0 V-3.4 C-1.8 -4.4 -0.6 -4.4 -0.6 -3.4 V-4.2 C-0.6 -5.2 0.6 -5.2 0.6 -4.2 V-3.6 C0.6 -4.6 1.8 -4.6 1.8 -3.6 V-2.6 C1.8 -3.4 3 -3.4 3 -2.6 V1.6 C3 3.6 2 4.6 0.4 4.6 C-1.4 4.6 -2.4 3.4 -3.6 0.4 Z" fill="#fff" stroke="#333" stroke-width="0.7"/></g><g transform="translate(37.4,36.7)"><circle cx="0" cy="0" r="2.6" fill="#fff" stroke="#444" stroke-width="0.8"/><path d="M-4 -4 L-1.8 -1.8 M4 -4 L1.8 -1.8 M-4 4 L-1.8 1.8 M4 4 L1.8 1.8" stroke="#444" stroke-width="0.8"/></g><g transform="translate(51.7,36.7)"><rect x="-4.6" y="-3.8" width="9.2" height="7.6" fill="#fff" stroke="#333" stroke-width="0.8"/><path d="M-3.8 3 L-1.2 -0.6 L0.6 1.4 L1.8 0.4 L3.8 3 Z" fill="#111"/><circle cx="2.4" cy="-1.8" r="0.8" fill="#333"/></g><g transform="translate(65.8,36.7)"><path d="M0 -5.2 V5.2 M-4.8 0.2 H4.8" stroke="#333" stroke-width="0.85"/><path d="M0.5 -4.6 V4.6" stroke="#d9c35a" stroke-width="0.45"/><circle cx="-2.6" cy="2.4" r="0.9" fill="none" stroke="#555" stroke-width="0.5"/></g><g transform="translate(79.8,36.7)"><path d="M4.4 -3.6 L-4 3.2 H4.8 M-3 4.4 H4.8" fill="none" stroke="#666" stroke-width="0.7"/></g><g transform="translate(9.3,50.9)"><path d="M-3.8 -3.8 L3.6 3.4" stroke="#333" stroke-width="1.05"/><circle cx="-4.2" cy="-4.2" r="1.1" fill="#fff" stroke="#333" stroke-width="0.65"/><circle cx="4" cy="3.8" r="1.3" fill="#fff" stroke="#333" stroke-width="0.65"/></g><g transform="translate(23.6,50.9)"><path d="M-1.8 -4 H4.8 V0.2 H1.6 V4.2 H-4.8 V0 H-1.8 Z" fill="#fff" stroke="#888" stroke-width="0.8" stroke-dasharray="1.5 1"/></g><g transform="translate(37.4,50.9)"><path d="M-1.8 -4 H4.8 V0.2 H1.6 V4.2 H-4.8 V0 H-1.8 Z" fill="#fff" stroke="#555" stroke-width="0.9"/></g><g transform="translate(51.7,50.9)"><path d="M-4.4 4.4 L4.2 -4.2" stroke="#333" stroke-width="0.8"/><rect x="-1.6" y="-2.6" width="3.2" height="5.2" rx="0.8" fill="#fff" stroke="#333" stroke-width="0.7" transform="rotate(45)"/><circle cx="-4.4" cy="4.4" r="0.7" fill="#333"/><circle cx="4.2" cy="-4.2" r="0.7" fill="#333"/></g><g transform="translate(65.8,50.9)"><rect x="-4" y="-4" width="8" height="8" fill="#fff" stroke="#444" stroke-width="0.9"/></g><g transform="translate(79.8,50.9)"><path d="M-4 -4 L4 4 M4 -4 L-4 4" stroke="#444" stroke-width="0.7"/><rect x="-2.2" y="-2.2" width="4.4" height="4.4" fill="#fff" stroke="#444" stroke-width="0.7"/><circle cx="-4" cy="-4" r="1" fill="#333"/><circle cx="4" cy="-4" r="1" fill="#333"/><circle cx="-4" cy="4" r="1" fill="#333"/><circle cx="4" cy="4" r="1" fill="#333"/></g></svg>
</div>
<div class="fp" style="left:784px;top:1.6px;width:103.2px;height:70.2px;background:#e4e9f4;box-shadow:inset 0 0 0 1px #b9bfcc,0 0 2.5px rgba(60,70,90,.55)">
<div class="fph"></div><div class="fpt">Layers</div>
<svg class="abs" style="left:76.6px;top:1.4px;overflow:visible" width="9" height="9" viewBox="0 0 9 9"><rect x="3.5" y="-0.2" width="2" height="2.6" rx="0.4" fill="#222" transform="rotate(0 4.5 4.5)"/><rect x="3.5" y="-0.2" width="2" height="2.6" rx="0.4" fill="#222" transform="rotate(60 4.5 4.5)"/><rect x="3.5" y="-0.2" width="2" height="2.6" rx="0.4" fill="#222" transform="rotate(120 4.5 4.5)"/><rect x="3.5" y="-0.2" width="2" height="2.6" rx="0.4" fill="#222" transform="rotate(180 4.5 4.5)"/><rect x="3.5" y="-0.2" width="2" height="2.6" rx="0.4" fill="#222" transform="rotate(240 4.5 4.5)"/><rect x="3.5" y="-0.2" width="2" height="2.6" rx="0.4" fill="#222" transform="rotate(300 4.5 4.5)"/><circle cx="4.5" cy="4.5" r="2.7" fill="none" stroke="#222" stroke-width="1.7"/></svg>
<div class="abs" style="left:91.6px;top:5.4px;width:5.6px;height:1.5px;background:#222"></div>
<div class="abs" style="left:0.6px;top:12.6px;width:99.6px;height:1px;background:#8f93a6"></div>
<div class="lyr" style="top:13.5px;background:linear-gradient(#f2f3ff,#dfe1fb)"></div>
<div class="abs" style="left:1.2px;top:13.5px;width:18.6px;height:13.9px;background:#f4200f"></div>
<div class="abs" style="left:19.8px;top:13.5px;width:1px;height:13.9px;background:#9a9db0"></div>
<div class="abs" style="left:38px;top:13.5px;width:1px;height:13.9px;background:#8f93a6"></div>
<svg class="abs" style="left:24.6px;top:17.5px;overflow:visible" width="10" height="6" viewBox="0 0 10 6"><path d="M0.4 3 C2.4 -0.2 7.6 -0.2 9.6 3 C7.6 6.2 2.4 6.2 0.4 3 Z" fill="#d9d9e2" stroke="#6a6a72" stroke-width="0.7"/><circle cx="5" cy="3" r="2" fill="#6a6a72"/><circle cx="4.4" cy="2.4" r="0.7" fill="#c8c8d2"/></svg>
<div class="lyn" style="top:17.2px;color:#4d58cc">TopLayer</div>
<div class="lyr" style="top:27.4px;background:#e0e1fb"></div>
<div class="abs" style="left:1.2px;top:27.4px;width:18.6px;height:13.9px;background:#1618f5"></div>
<div class="abs" style="left:19.8px;top:27.4px;width:1px;height:13.9px;background:#9a9db0"></div>
<div class="abs" style="left:38px;top:27.4px;width:1px;height:13.9px;background:#8f93a6"></div>
<svg class="abs" style="left:24.6px;top:31.4px;overflow:visible" width="10" height="6" viewBox="0 0 10 6"><path d="M0.4 3 C2.4 -0.2 7.6 -0.2 9.6 3 C7.6 6.2 2.4 6.2 0.4 3 Z" fill="#d9d9e2" stroke="#6a6a72" stroke-width="0.7"/><circle cx="5" cy="3" r="2" fill="#6a6a72"/><circle cx="4.4" cy="2.4" r="0.7" fill="#c8c8d2"/></svg>
<div class="lyn" style="top:31.099999999999998px;color:#333">BottomLayer</div>
<div class="lyr" style="top:41.3px;background:#e0e1fb"></div>
<div class="abs" style="left:1.2px;top:41.3px;width:18.6px;height:13.9px;background:#fff000"></div>
<div class="abs" style="left:19.8px;top:41.3px;width:1px;height:13.9px;background:#9a9db0"></div>
<div class="abs" style="left:38px;top:41.3px;width:1px;height:13.9px;background:#8f93a6"></div>
<svg class="abs" style="left:24.6px;top:45.3px;overflow:visible" width="10" height="6" viewBox="0 0 10 6"><path d="M0.4 3 C2.4 -0.2 7.6 -0.2 9.6 3 C7.6 6.2 2.4 6.2 0.4 3 Z" fill="#d9d9e2" stroke="#6a6a72" stroke-width="0.7"/><circle cx="5" cy="3" r="2" fill="#6a6a72"/><circle cx="4.4" cy="2.4" r="0.7" fill="#c8c8d2"/></svg>
<div class="lyn" style="top:45.0px;color:#333">TopSilkLayer</div>
<div class="lyr" style="top:55.2px;background:#e0e1fb"></div>
<div class="abs" style="left:1.2px;top:55.2px;width:18.6px;height:13.9px;background:#847607"></div>
<div class="abs" style="left:19.8px;top:55.2px;width:1px;height:13.9px;background:#9a9db0"></div>
<div class="abs" style="left:38px;top:55.2px;width:1px;height:13.9px;background:#8f93a6"></div>
<svg class="abs" style="left:24.6px;top:59.2px;overflow:visible" width="10" height="6" viewBox="0 0 10 6"><path d="M0.4 3 C2.4 -0.2 7.6 -0.2 9.6 3 C7.6 6.2 2.4 6.2 0.4 3 Z" fill="#d9d9e2" stroke="#6a6a72" stroke-width="0.7"/><circle cx="5" cy="3" r="2" fill="#6a6a72"/><circle cx="4.4" cy="2.4" r="0.7" fill="#c8c8d2"/></svg>
<div class="lyn" style="top:58.900000000000006px;color:#333">BottomSilkLayer</div>
<svg class="abs" style="left:5.6px;top:15.6px;overflow:visible" width="10" height="9" viewBox="0 0 10 9"><path d="M1 8 L1.8 5.4 L6.6 0.8 L8.6 2.8 L3.8 7.4 Z" fill="#f6c56a" stroke="#fff" stroke-width="0.5"/><path d="M1 8 L1.8 5.4 L3.8 7.4 Z" fill="#fff"/><path d="M6.6 0.8 L8.6 2.8 L7.6 3.8 L5.6 1.8 Z" fill="#e98a3a"/></svg>
<div class="abs" style="left:99.6px;top:12.5px;width:1px;height:56.4px;background:#9a9db0"></div>
</div>
<div id="dlg"></div><div id="dlgh"></div><div id="dlgb"></div>
<svg class="abs" style="left:249.8px;top:317px;overflow:visible" width="9" height="10" viewBox="0 0 9 10"><path d="M0.6 9.4 H6" stroke="#9ad08a" stroke-width="0.7"/><path d="M5.4 5.6 L8.2 8.6" stroke="#c98a4a" stroke-width="1.4" stroke-linecap="round"/><circle cx="3.5" cy="3.5" r="2.9" fill="#d6e8fb" stroke="#8ab0e0" stroke-width="0.9"/><path d="M1.8 3 A1.8 1.8 0 0 1 4 1.6" fill="none" stroke="#fff" stroke-width="0.7"/></svg>
<div class="t" style="left:259.4px;top:318.2px;font-size:7.1px;font-weight:bold;color:#2d4e8c;letter-spacing:-0.02px">Browse and search hundreds of thousands of components</div>
<div class="abs" style="left:807.4px;top:315.6px;width:9.4px;height:9.4px;border-radius:1.6px;background:linear-gradient(#cfe1fb,#9cc0f2);border:1px solid #9fc0ec"></div>
<svg class="abs" style="left:809.6px;top:318.4px" width="5" height="4" viewBox="0 0 5 4"><path d="M0.4 3.4 L2.5 0.8 L4.6 3.4 Z" fill="#f4f8ff"/></svg>
<div class="abs" style="left:818px;top:315.6px;width:9.4px;height:9.4px;border-radius:1.6px;background:linear-gradient(#f0b48a,#e58f5a);border:1px solid #d9905e"></div>
<svg class="abs" style="left:820.2px;top:317.8px" width="5" height="5" viewBox="0 0 5 5"><path d="M0.6 0.6 L4.4 4.4 M4.4 0.6 L0.6 4.4" stroke="#fff" stroke-width="1.1"/></svg>
<div class="abs" style="left:358px;top:334px;width:293.6px;height:18.6px;background:#fff;border:1px solid #e2e6ee;border-radius:2px"></div>
<div class="t" style="left:363.6px;top:338.2px;font-size:9.8px;color:#222">tip122</div>
<div class="abs" style="left:653.8px;top:334.2px;width:64.6px;height:18.4px;background:#3d80e8;border-radius:2px"></div>
<svg class="abs" style="left:665.6px;top:338px;overflow:visible" width="11" height="11" viewBox="0 0 11 11"><circle cx="4.2" cy="4.2" r="3.3" fill="none" stroke="#fff" stroke-width="1.3"/><path d="M6.8 6.8 L10 10" stroke="#fff" stroke-width="1.7" stroke-linecap="round"/></svg>
<div class="t" style="left:677.4px;top:338.8px;font-size:8.7px;font-weight:bold;color:#fff">Search</div>
<div class="abs" style="left:307.6px;top:361px;width:100.4px;height:220px;border:1px solid #d5e3f3;background:#fff"></div>
<div class="dbtn" style="top:361px;height:20.4px">LCSC<br>(Official)</div>
<div class="dbtn" style="top:384.6px;height:27.6px">Assembly<br>LCSC<br>Components</div>
<div class="dbtn" style="top:415.2px;height:21px">System<br>Components</div>
<div class="dbtn" style="top:439.6px;height:20.4px">My Parts</div>
<div class="dbtn" style="top:463.2px;height:20.4px">My Modules</div>
<div class="dbtn" style="top:486.8px;height:20.8px">Common<br>Modules</div>
<div class="dbtn" style="top:510.4px;height:20.4px">User<br>Contributions</div>
<div class="dbtn" style="top:534.4px;height:20.6px;background:#9fc7f8;border-color:#9fc7f8;color:#d2436a;font-weight:bold;letter-spacing:-0.1px">Search<br>Results</div>
<svg class="abs" style="left:304.4px;top:541.6px" width="4" height="7" viewBox="0 0 4 7"><path d="M0 0 L3.4 3.5 L0 7 Z" fill="#9fc7f8"/></svg>
<div class="abs" style="left:308.6px;top:370.4px;width:98.6px;height:9.6px;background:#f6e278"></div>
<svg class="abs" style="left:317.6px;top:360.59999999999997px;overflow:visible" width="8.4" height="9.3" viewBox="0 0 9 10"><path d="M0.6 9.4 H6" stroke="#9ad08a" stroke-width="0.7"/><path d="M5.4 5.6 L8.2 8.6" stroke="#c98a4a" stroke-width="1.4" stroke-linecap="round"/><circle cx="3.5" cy="3.5" r="2.9" fill="#d6e8fb" stroke="#8ab0e0" stroke-width="0.9"/><path d="M1.8 3 A1.8 1.8 0 0 1 4 1.6" fill="none" stroke="#fff" stroke-width="0.7"/></svg>
<div class="tree" style="top:362.2px">My Parts (0)</div>
<svg class="abs" style="left:317.6px;top:370.2px;overflow:visible" width="8.4" height="9.3" viewBox="0 0 9 10"><path d="M0.6 9.4 H6" stroke="#9ad08a" stroke-width="0.7"/><path d="M5.4 5.6 L8.2 8.6" stroke="#c98a4a" stroke-width="1.4" stroke-linecap="round"/><circle cx="3.5" cy="3.5" r="2.9" fill="#d6e8fb" stroke="#8ab0e0" stroke-width="0.9"/><path d="M1.8 3 A1.8 1.8 0 0 1 4 1.6" fill="none" stroke="#fff" stroke-width="0.7"/></svg>
<div class="tree" style="top:371.8px">System Components (7)</div>
<svg class="abs" style="left:317.6px;top:379.79999999999995px;overflow:visible" width="8.4" height="9.3" viewBox="0 0 9 10"><path d="M0.6 9.4 H6" stroke="#9ad08a" stroke-width="0.7"/><path d="M5.4 5.6 L8.2 8.6" stroke="#c98a4a" stroke-width="1.4" stroke-linecap="round"/><circle cx="3.5" cy="3.5" r="2.9" fill="#d6e8fb" stroke="#8ab0e0" stroke-width="0.9"/><path d="M1.8 3 A1.8 1.8 0 0 1 4 1.6" fill="none" stroke="#fff" stroke-width="0.7"/></svg>
<div class="tree" style="top:381.4px">User Contributions (22)</div>
<svg class="abs" style="left:317.6px;top:389.4px;overflow:visible" width="8.4" height="9.3" viewBox="0 0 9 10"><path d="M0.6 9.4 H6" stroke="#9ad08a" stroke-width="0.7"/><path d="M5.4 5.6 L8.2 8.6" stroke="#c98a4a" stroke-width="1.4" stroke-linecap="round"/><circle cx="3.5" cy="3.5" r="2.9" fill="#d6e8fb" stroke="#8ab0e0" stroke-width="0.9"/><path d="M1.8 3 A1.8 1.8 0 0 1 4 1.6" fill="none" stroke="#fff" stroke-width="0.7"/></svg>
<div class="tree" style="top:391.0px">Modules (0)</div>
<div class="abs" style="left:413.2px;top:360.6px;width:409px;height:182px;border:1px solid #dfe6ee;background:#fff"></div>
<div class="abs" style="left:413.8px;top:361.2px;width:407.6px;height:13.6px;background:#e0e0e0"></div>
<div class="tc" style="left:416.6px;top:365.4px;font-weight:bold;color:#333">Title(PartNO)</div>
<div class="tc" style="left:464.8px;top:365.4px;font-weight:bold;color:#333">Package</div>
<div class="tc" style="left:528.2px;top:365.4px;font-weight:bold;color:#333">Manufacturer</div>
<div class="tc" style="left:593.2px;top:365.4px;font-weight:bold;color:#333">Description</div>
<div class="tr" style="top:375.0px;background:#fff"></div>
<svg class="abs" style="left:416.4px;top:377.8px;overflow:visible" width="9" height="9" viewBox="0 0 9 9"><rect x="2.4" y="0.6" width="4.2" height="7.8" rx="0.6" fill="#fff" stroke="#4040c8" stroke-width="0.8"/><path d="M0.4 2 H2.4 M0.4 4.5 H2.4 M0.4 7 H2.4 M6.6 2 H8.6 M6.6 4.5 H8.6 M6.6 7 H8.6" stroke="#4040c8" stroke-width="0.8"/></svg>
<div class="tc" style="left:426.6px;top:379.6px;color:#2a2a2a">TIP122</div>
<div class="tc" style="left:464.8px;top:379.6px;color:#2a2a2a"></div>
<div class="tc" style="left:528.2px;top:379.6px;color:#2a2a2a"></div>
<div class="tc" style="left:593.2px;top:379.6px;color:#2a2a2a;letter-spacing:-0.03px"></div>
<div class="tr" style="top:389.5px;background:#fff"></div>
<svg class="abs" style="left:416.4px;top:392.3px;overflow:visible" width="9" height="9" viewBox="0 0 9 9"><rect x="2.4" y="0.6" width="4.2" height="7.8" rx="0.6" fill="#fff" stroke="#4040c8" stroke-width="0.8"/><path d="M0.4 2 H2.4 M0.4 4.5 H2.4 M0.4 7 H2.4 M6.6 2 H8.6 M6.6 4.5 H8.6 M6.6 7 H8.6" stroke="#4040c8" stroke-width="0.8"/></svg>
<div class="tc" style="left:426.6px;top:394.1px;color:#2a2a2a">TIP122</div>
<div class="tc" style="left:464.8px;top:394.1px;color:#2a2a2a">221A-02</div>
<div class="tc" style="left:528.2px;top:394.1px;color:#2a2a2a"></div>
<div class="tc" style="left:593.2px;top:394.1px;color:#2a2a2a;letter-spacing:-0.03px">Darlington Silicon Power NPN Transistor, 8 Amp, 100 Volts and 65 Watts</div>
<div class="tr" style="top:404.0px;background:#fff"></div>
<svg class="abs" style="left:416.4px;top:406.8px;overflow:visible" width="9" height="9" viewBox="0 0 9 9"><rect x="2.4" y="0.6" width="4.2" height="7.8" rx="0.6" fill="#fff" stroke="#4040c8" stroke-width="0.8"/><path d="M0.4 2 H2.4 M0.4 4.5 H2.4 M0.4 7 H2.4 M6.6 2 H8.6 M6.6 4.5 H8.6 M6.6 7 H8.6" stroke="#4040c8" stroke-width="0.8"/></svg>
<div class="tc" style="left:426.6px;top:408.6px;color:#2a2a2a">TIP122</div>
<div class="tc" style="left:464.8px;top:408.6px;color:#2a2a2a">TO-220</div>
<div class="tc" style="left:528.2px;top:408.6px;color:#2a2a2a"></div>
<div class="tc" style="left:593.2px;top:408.6px;color:#2a2a2a;letter-spacing:-0.03px">Plastic Medium-Power, Complementary Silicon Transistor, 3-Pin TO-220,</div>
<div class="tr" style="top:418.5px;background:#fff"></div>
<svg class="abs" style="left:416.4px;top:421.3px;overflow:visible" width="9" height="9" viewBox="0 0 9 9"><rect x="2.4" y="0.6" width="4.2" height="7.8" rx="0.6" fill="#fff" stroke="#4040c8" stroke-width="0.8"/><path d="M0.4 2 H2.4 M0.4 4.5 H2.4 M0.4 7 H2.4 M6.6 2 H8.6 M6.6 4.5 H8.6 M6.6 7 H8.6" stroke="#4040c8" stroke-width="0.8"/></svg>
<div class="tc" style="left:426.6px;top:423.1px;color:#2a2a2a">TIP122</div>
<svg class="abs" style="left:451.6px;top:421.1px;overflow:visible" width="9" height="9" viewBox="0 0 9 9"><path d="M0.4 0.8 H1.8 L3 5.8 H7.6 L8.4 2.4 H2.4" fill="none" stroke="#444" stroke-width="0.7"/><circle cx="3.6" cy="7.6" r="0.8" fill="#444"/><circle cx="7" cy="7.6" r="0.8" fill="#444"/></svg>
<div class="tc" style="left:464.8px;top:423.1px;color:#2a2a2a">TO-220</div>
<div class="tc" style="left:528.2px;top:423.1px;color:#2a2a2a">STMicroelectronics</div>
<div class="tc" style="left:593.2px;top:423.1px;color:#2a2a2a;letter-spacing:-0.03px">TIP122</div>
<div class="tr" style="top:433.0px;background:#fff"></div>
<svg class="abs" style="left:416.4px;top:435.8px;overflow:visible" width="9" height="9" viewBox="0 0 9 9"><rect x="2.4" y="0.6" width="4.2" height="7.8" rx="0.6" fill="#fff" stroke="#4040c8" stroke-width="0.8"/><path d="M0.4 2 H2.4 M0.4 4.5 H2.4 M0.4 7 H2.4 M6.6 2 H8.6 M6.6 4.5 H8.6 M6.6 7 H8.6" stroke="#4040c8" stroke-width="0.8"/></svg>
<div class="tc" style="left:426.6px;top:437.6px;color:#2a2a2a">TIP122</div>
<svg class="abs" style="left:451.6px;top:435.6px;overflow:visible" width="9" height="9" viewBox="0 0 9 9"><path d="M0.4 0.8 H1.8 L3 5.8 H7.6 L8.4 2.4 H2.4" fill="none" stroke="#444" stroke-width="0.7"/><circle cx="3.6" cy="7.6" r="0.8" fill="#444"/><circle cx="7" cy="7.6" r="0.8" fill="#444"/></svg>
<div class="tc" style="left:464.8px;top:437.6px;color:#2a2a2a">TO-220(TO-220-3)</div>
<div class="tc" style="left:528.2px;top:437.6px;color:#2a2a2a"></div>
<div class="tc" style="left:593.2px;top:437.6px;color:#2a2a2a;letter-spacing:-0.03px"></div>
<div class="tr" style="top:447.5px;background:#9ab9e2"></div>
<svg class="abs" style="left:416.4px;top:450.3px;overflow:visible" width="9" height="9" viewBox="0 0 9 9"><rect x="2.4" y="0.6" width="4.2" height="7.8" rx="0.6" fill="#c9d7f4" stroke="#3a3ad0" stroke-width="0.8"/><path d="M0.4 2 H2.4 M0.4 4.5 H2.4 M0.4 7 H2.4 M6.6 2 H8.6 M6.6 4.5 H8.6 M6.6 7 H8.6" stroke="#3a3ad0" stroke-width="0.8"/></svg>
<div class="tc" style="left:426.6px;top:452.1px;color:#f2f6fc">TIP122G</div>
<div class="tc" style="left:464.8px;top:452.1px;color:#f2f6fc">TO-220</div>
<div class="tc" style="left:528.2px;top:452.1px;color:#f2f6fc"></div>
<div class="tc" style="left:593.2px;top:452.1px;color:#f2f6fc;letter-spacing:-0.03px">Plastic Medium-Power, Complementary Silicon Transistor, 3-Pin TO-220,</div>
<div class="tr" style="top:462.0px;background:#fff"></div>
<svg class="abs" style="left:416.4px;top:464.8px;overflow:visible" width="9" height="9" viewBox="0 0 9 9"><rect x="2.4" y="0.6" width="4.2" height="7.8" rx="0.6" fill="#fff" stroke="#4040c8" stroke-width="0.8"/><path d="M0.4 2 H2.4 M0.4 4.5 H2.4 M0.4 7 H2.4 M6.6 2 H8.6 M6.6 4.5 H8.6 M6.6 7 H8.6" stroke="#4040c8" stroke-width="0.8"/></svg>
<div class="tc" style="left:426.6px;top:466.6px;color:#2a2a2a">TIP122</div>
<svg class="abs" style="left:451.6px;top:464.6px;overflow:visible" width="9" height="9" viewBox="0 0 9 9"><path d="M0.4 0.8 H1.8 L3 5.8 H7.6 L8.4 2.4 H2.4" fill="none" stroke="#444" stroke-width="0.7"/><circle cx="3.6" cy="7.6" r="0.8" fill="#444"/><circle cx="7" cy="7.6" r="0.8" fill="#444"/></svg>
<div class="tc" style="left:464.8px;top:466.6px;color:#2a2a2a">TO-220(TO-220-3)</div>
<div class="tc" style="left:528.2px;top:466.6px;color:#2a2a2a"></div>
<div class="tc" style="left:593.2px;top:466.6px;color:#2a2a2a;letter-spacing:-0.03px"></div>
<div class="vs" style="left:462px;top:361.2px;height:115.4px"></div>
<div class="vs" style="left:462px;top:447.6px;height:14.3px;background:#a9c3e6"></div>
<div class="vs" style="left:525.2px;top:361.2px;height:115.4px"></div>
<div class="vs" style="left:525.2px;top:447.6px;height:14.3px;background:#a9c3e6"></div>
<div class="vs" style="left:590.2px;top:361.2px;height:115.4px"></div>
<div class="vs" style="left:590.2px;top:447.6px;height:14.3px;background:#a9c3e6"></div>
<div class="abs" style="left:414px;top:535px;width:407.4px;height:7px;border-radius:3px;background:#f3f6fb;border:1px solid #dfe6f0"></div>
<div class="abs" style="left:414px;top:535px;width:363.6px;height:7px;border-radius:3px;background:linear-gradient(#cfe3fc,#b2d2f9);border:1px solid #86b6f0"></div>
<div class="abs" style="left:413.2px;top:549px;width:409px;height:32px;border:1px solid #d5e3ef;background:#fff"></div>
<svg class="abs" style="left:416.8px;top:552.6px;overflow:visible" width="9" height="9" viewBox="0 0 9 9"><rect x="2.4" y="0.6" width="4.2" height="7.8" rx="0.6" fill="#fff" stroke="#4040c8" stroke-width="0.8"/><path d="M0.4 2 H2.4 M0.4 4.5 H2.4 M0.4 7 H2.4 M6.6 2 H8.6 M6.6 4.5 H8.6 M6.6 7 H8.6" stroke="#4040c8" stroke-width="0.8"/></svg>
<div class="tc" style="left:427.4px;top:553.6px;font-size:7.3px;color:#444">TIP122G</div>
<div class="abs" style="left:582px;top:564.6px;width:57.6px;height:14px;border:1px solid #cfcfcf;border-radius:3px;background:#fff"></div>
<div class="abs" style="left:624.4px;top:571.4px;width:1px;height:6px;background:#c07070"></div>
<div class="abs" style="left:652.6px;top:573.2px;width:70.6px;height:6px;border-radius:2px 2px 0 0;background:#000"></div>
<svg class="abs" style="left:0;top:505px;overflow:hidden" width="160" height="71" viewBox="0 505 160 71"><defs><clipPath id="wc"><rect x="0" y="505" width="153" height="71"/></clipPath><linearGradient id="wg" x1="0" y1="0" x2="0" y2="1"><stop offset="0" stop-color="#8cc4ea"/><stop offset="0.55" stop-color="#4f96d4"/><stop offset="1" stop-color="#3f7fc4"/></linearGradient><linearGradient id="wg2" x1="0" y1="0" x2="1" y2="0"><stop offset="0" stop-color="#5a9ad6"/><stop offset="1" stop-color="#86bce6"/></linearGradient></defs><g opacity="0.8"><path d="M6.3 512.6 H19.8 L32 524.6 L44.4 512.6 H57.8 V559.4 H44.6 V526 L33.8 536.6 H30.4 L19.6 525.6 V559.4 H6.3 Z" fill="url(#wg2)"/><rect x="8.4" y="518" width="8.4" height="36" rx="3" fill="#b9d3e6" opacity="0.55"/><circle cx="12.6" cy="535.4" r="4.4" fill="#e6dcc0" opacity="0.8"/><circle cx="12.6" cy="535.4" r="1.6" fill="#8fa6b8"/><circle cx="12.6" cy="548" r="2.6" fill="#c9c9c9" opacity="0.8"/><rect x="10.6" y="519" width="4" height="8" fill="#e9e4d4" opacity="0.8"/><rect x="28.8" y="524.4" width="6" height="7.6" rx="1" fill="#4a4f58"/><g stroke="#cfe4f6" stroke-width="0.5" opacity="0.7"><line x1="45.4" y1="515.0" x2="57" y2="515.0" stroke-dasharray="1.4 0.8"/><line x1="45.4" y1="517.6" x2="57" y2="517.6" stroke-dasharray="1.4 0.8"/><line x1="45.4" y1="520.2" x2="57" y2="520.2" stroke-dasharray="1.4 0.8"/><line x1="45.4" y1="522.8" x2="57" y2="522.8" stroke-dasharray="1.4 0.8"/><line x1="45.4" y1="525.4" x2="57" y2="525.4" stroke-dasharray="1.4 0.8"/><line x1="45.4" y1="528.0" x2="57" y2="528.0" stroke-dasharray="1.4 0.8"/><line x1="45.4" y1="530.6" x2="57" y2="530.6" stroke-dasharray="1.4 0.8"/><line x1="45.4" y1="533.2" x2="57" y2="533.2" stroke-dasharray="1.4 0.8"/><line x1="45.4" y1="535.8" x2="57" y2="535.8" stroke-dasharray="1.4 0.8"/><line x1="45.4" y1="538.4" x2="57" y2="538.4" stroke-dasharray="1.4 0.8"/><line x1="45.4" y1="541.0" x2="57" y2="541.0" stroke-dasharray="1.4 0.8"/><line x1="45.4" y1="543.6" x2="57" y2="543.6" stroke-dasharray="1.4 0.8"/><line x1="45.4" y1="546.2" x2="57" y2="546.2" stroke-dasharray="1.4 0.8"/><line x1="45.4" y1="548.8" x2="57" y2="548.8" stroke-dasharray="1.4 0.8"/><line x1="45.4" y1="551.4" x2="57" y2="551.4" stroke-dasharray="1.4 0.8"/><line x1="45.4" y1="554.0" x2="57" y2="554.0" stroke-dasharray="1.4 0.8"/><line x1="45.4" y1="556.6" x2="57" y2="556.6" stroke-dasharray="1.4 0.8"/></g><text x="78" y="532.4" font-family="Liberation Sans, sans-serif" font-weight="bold" font-size="23.6" textLength="54" lengthAdjust="spacingAndGlyphs" fill="url(#wg)" stroke="#4a8acc" stroke-width="0.5">How To</text><text x="58.6" y="559.4" font-family="Liberation Sans, sans-serif" font-weight="bold" font-size="23.6" textLength="96.6" lengthAdjust="spacingAndGlyphs" fill="url(#wg)" stroke="#4a8acc" stroke-width="0.5">ECHATRONICS</text></g><text clip-path="url(#wc)" x="6.4" y="571.2" font-family="Liberation Mono, monospace" font-size="8.9" letter-spacing="0.76" fill="#4f4f55" stroke="#4f4f55" stroke-width="0.25">www.HowToMechatronics.com</text></svg>
<div class="abs" style="left:0;top:0;width:1.1px;height:576px;background:#1c1c1e"></div>
</div></body></html>
